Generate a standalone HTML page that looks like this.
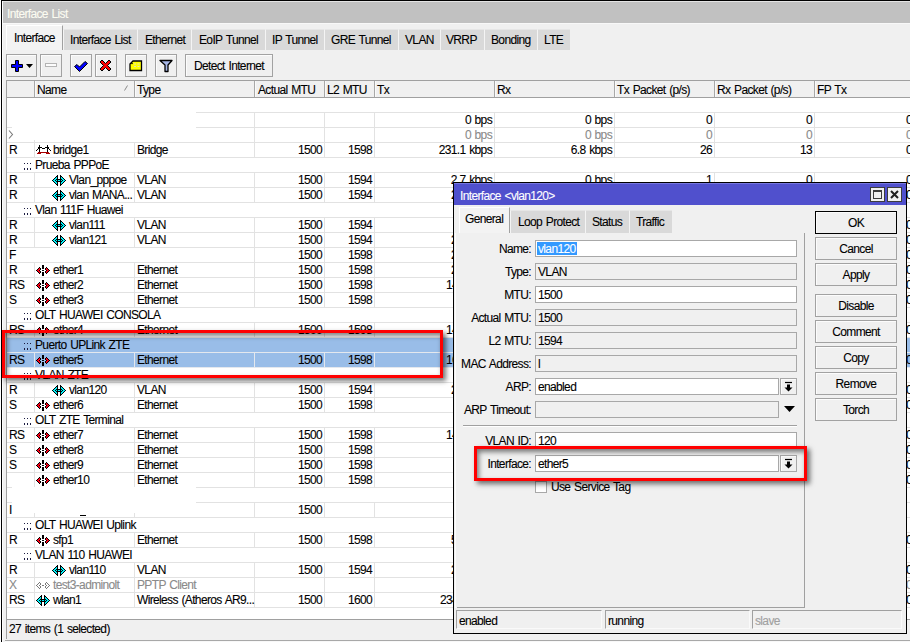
<!DOCTYPE html><html><head><meta charset="utf-8"><style>
*{box-sizing:border-box}
html,body{margin:0;padding:0}
body{width:910px;height:642px;overflow:hidden;position:relative;background:#f0f0f0;font-family:"Liberation Sans",sans-serif;font-size:12px;letter-spacing:-0.65px;word-spacing:1px;color:#000}
.a{position:absolute}
svg.a{overflow:visible}
.t{position:absolute;white-space:nowrap;line-height:13px;height:13px;-webkit-text-stroke:0.1px currentColor}
.btn{position:absolute;border:1px solid #a2a2a2;background:#f0f0f0;box-shadow:inset 1px 1px 0 #fcfcfc}
.in{position:absolute;border:1px solid #a8a8a8;background:#fff}
.dis{position:absolute;border:1px solid #a8a8a8;background:#f0f0f0}
</style></head><body>
<div class="a" style="left:0px;top:0px;width:1px;height:642px;background:#fff"></div>
<div class="a" style="left:1px;top:0px;width:1px;height:642px;background:#000"></div>
<div class="a" style="left:1px;top:0px;width:909px;height:1px;background:#000"></div>
<div class="a" style="left:2px;top:1px;width:908px;height:1px;background:#e4e4e4"></div>
<div class="a" style="left:2px;top:1px;width:1px;height:641px;background:#fcfcfc"></div>
<div class="a" style="left:3px;top:2px;width:907px;height:21px;background:#c1c1c1"></div>
<div class="a" style="left:3px;top:23px;width:907px;height:1px;background:#f8f8f8"></div>
<div class="t" style="left:7px;top:8px;color:#fcfcf2">Interface List</div>
<div class="a" style="left:6px;top:25px;width:57px;height:25px;background:#f3f3f3;border-left:1px solid #fff;border-top:1px solid #fff;border-right:1px solid #a0a0a0"></div>
<div class="t" style="left:14px;top:32px;">Interface</div>
<div class="a" style="left:63px;top:29px;width:74px;height:21px;background:#d9d9d9;border-left:1px solid #f4f4f4;border-top:1px solid #e6e6e6"></div>
<div class="t" style="left:70px;top:34px;">Interface List</div>
<div class="a" style="left:137px;top:29px;width:54px;height:21px;background:#d9d9d9;border-left:1px solid #f4f4f4;border-top:1px solid #e6e6e6"></div>
<div class="t" style="left:145px;top:34px;">Ethernet</div>
<div class="a" style="left:191px;top:29px;width:74px;height:21px;background:#d9d9d9;border-left:1px solid #f4f4f4;border-top:1px solid #e6e6e6"></div>
<div class="t" style="left:199px;top:34px;">EoIP Tunnel</div>
<div class="a" style="left:265px;top:29px;width:59px;height:21px;background:#d9d9d9;border-left:1px solid #f4f4f4;border-top:1px solid #e6e6e6"></div>
<div class="t" style="left:272px;top:34px;">IP Tunnel</div>
<div class="a" style="left:324px;top:29px;width:74px;height:21px;background:#d9d9d9;border-left:1px solid #f4f4f4;border-top:1px solid #e6e6e6"></div>
<div class="t" style="left:331px;top:34px;">GRE Tunnel</div>
<div class="a" style="left:398px;top:29px;width:42px;height:21px;background:#d9d9d9;border-left:1px solid #f4f4f4;border-top:1px solid #e6e6e6"></div>
<div class="t" style="left:405px;top:34px;">VLAN</div>
<div class="a" style="left:440px;top:29px;width:44px;height:21px;background:#d9d9d9;border-left:1px solid #f4f4f4;border-top:1px solid #e6e6e6"></div>
<div class="t" style="left:446px;top:34px;">VRRP</div>
<div class="a" style="left:484px;top:29px;width:53px;height:21px;background:#d9d9d9;border-left:1px solid #f4f4f4;border-top:1px solid #e6e6e6"></div>
<div class="t" style="left:491px;top:34px;">Bonding</div>
<div class="a" style="left:537px;top:29px;width:33px;height:21px;background:#d9d9d9;border-left:1px solid #f4f4f4;border-top:1px solid #e6e6e6"></div>
<div class="t" style="left:544px;top:34px;">LTE</div>
<div class="btn" style="left:6px;top:54px;width:31px;height:23px"></div>
<div class="btn" style="left:40px;top:54px;width:22px;height:23px"></div>
<div class="btn" style="left:70px;top:54px;width:22px;height:23px"></div>
<div class="btn" style="left:95px;top:54px;width:22px;height:23px"></div>
<div class="btn" style="left:125px;top:54px;width:22px;height:23px"></div>
<div class="btn" style="left:155px;top:54px;width:22px;height:23px"></div>
<div class="btn" style="left:185px;top:54px;width:88px;height:23px"></div>
<div class="t" style="left:194px;top:60px;">Detect Internet</div>
<svg class="a" style="left:10px;top:59px" width="26" height="14" viewBox="0 0 26 14"><path d="M5.5 1.5h3v4h4v3h-4v4h-3v-4h-4v-3h4z" fill="#0000ff" stroke="#000" stroke-width="1"/><path d="M16 5h7l-3.5 4z" fill="#000"/></svg>
<svg class="a" style="left:44px;top:62px" width="14" height="8" viewBox="0 0 14 8"><rect x="1.5" y="1.5" width="11" height="3" fill="#fcfcfc" stroke="#b4b4b4"/></svg>
<svg class="a" style="left:73px;top:59px" width="16" height="14" viewBox="0 0 16 14"><path d="M1.5 7.5l2.5-2 2.5 2.5 5.5-5.5 2.5 2-8 8z" fill="#0000ff" stroke="#000" stroke-width="1" stroke-linejoin="round"/></svg>
<svg class="a" style="left:99px;top:59px" width="14" height="14" viewBox="0 0 14 14"><path d="M1 3l2-2 3.5 3.5 3.5-3.5 2 2-3.5 3.5 3.5 3.5-2 2-3.5-3.5-3.5 3.5-2-2 3.5-3.5z" fill="#ff0000" stroke="#000" stroke-width="1"/></svg>
<svg class="a" style="left:128px;top:60px" width="16" height="12" viewBox="0 0 16 12"><path d="M2 4l3-3h8.5v9.5h-11.5z" fill="#ffff00" stroke="#000" stroke-width="1.3"/><path d="M6 4h2M9.5 4h2M6 6.5h2M9.5 6.5h2" stroke="#e0e0c0" stroke-width="1"/><circle cx="4" cy="3.5" r="0.8" fill="#000"/></svg>
<svg class="a" style="left:159px;top:59px" width="14" height="14" viewBox="0 0 14 14"><path d="M1 1.5h12l-4 4.5v6.5h-3v-6.5z" fill="#a6b6e6" stroke="#000" stroke-width="1.3" stroke-linejoin="round"/></svg>
<div class="a" style="left:6px;top:80px;width:904px;height:18px;background:#f0f0f0;border-top:1px solid #a0a0a0;border-bottom:1px solid #a0a0a0;border-left:1px solid #a0a0a0"></div>
<div class="a" style="left:34px;top:81px;width:1px;height:16px;background:#a8a8a8"></div>
<div class="a" style="left:35px;top:81px;width:1px;height:16px;background:#fafafa"></div>
<div class="a" style="left:134px;top:81px;width:1px;height:16px;background:#a8a8a8"></div>
<div class="a" style="left:135px;top:81px;width:1px;height:16px;background:#fafafa"></div>
<div class="a" style="left:254px;top:81px;width:1px;height:16px;background:#a8a8a8"></div>
<div class="a" style="left:255px;top:81px;width:1px;height:16px;background:#fafafa"></div>
<div class="a" style="left:324px;top:81px;width:1px;height:16px;background:#a8a8a8"></div>
<div class="a" style="left:325px;top:81px;width:1px;height:16px;background:#fafafa"></div>
<div class="a" style="left:374px;top:81px;width:1px;height:16px;background:#a8a8a8"></div>
<div class="a" style="left:375px;top:81px;width:1px;height:16px;background:#fafafa"></div>
<div class="a" style="left:494px;top:81px;width:1px;height:16px;background:#a8a8a8"></div>
<div class="a" style="left:495px;top:81px;width:1px;height:16px;background:#fafafa"></div>
<div class="a" style="left:614px;top:81px;width:1px;height:16px;background:#a8a8a8"></div>
<div class="a" style="left:615px;top:81px;width:1px;height:16px;background:#fafafa"></div>
<div class="a" style="left:714px;top:81px;width:1px;height:16px;background:#a8a8a8"></div>
<div class="a" style="left:715px;top:81px;width:1px;height:16px;background:#fafafa"></div>
<div class="a" style="left:814px;top:81px;width:1px;height:16px;background:#a8a8a8"></div>
<div class="a" style="left:815px;top:81px;width:1px;height:16px;background:#fafafa"></div>
<div class="t" style="left:37px;top:84px;">Name</div>
<div class="t" style="left:137px;top:84px;">Type</div>
<div class="t" style="left:258px;top:84px;">Actual MTU</div>
<div class="t" style="left:327px;top:84px;">L2 MTU</div>
<div class="t" style="left:377px;top:84px;">Tx</div>
<div class="t" style="left:497px;top:84px;">Rx</div>
<div class="t" style="left:617px;top:84px;">Tx Packet (p/s)</div>
<div class="t" style="left:717px;top:84px;">Rx Packet (p/s)</div>
<div class="t" style="left:817px;top:84px;">FP Tx</div>
<svg class="a" style="left:123px;top:84px" width="6" height="8" viewBox="0 0 6 8"><path d="M1.5 6.5l3-5" stroke="#8a8a8a" stroke-width="1"/></svg>
<div class="a" style="left:6px;top:98px;width:1px;height:541px;background:#a0a0a0"></div>
<div class="a" style="left:7px;top:98px;width:903px;height:521px;background:#fff"></div>
<div class="a" style="left:6px;top:619px;width:904px;height:1px;background:#a0a0a0"></div>
<div class="a" style="left:5px;top:640px;width:905px;height:1px;background:#a8a8a8"></div>
<div class="a" style="left:5px;top:641px;width:905px;height:1px;background:#f8f8f8"></div>
<div class="a" style="left:196px;top:112px;width:714px;height:1px;background:#e2e2e2"></div>
<div class="a" style="left:196px;top:127px;width:714px;height:1px;background:#e2e2e2"></div>
<div class="a" style="left:7px;top:127px;width:5px;height:1px;background:#e2e2e2"></div>
<div class="a" style="left:254px;top:113px;width:1px;height:14px;background:#e2e2e2"></div>
<div class="a" style="left:324px;top:113px;width:1px;height:14px;background:#e2e2e2"></div>
<div class="a" style="left:374px;top:113px;width:1px;height:14px;background:#e2e2e2"></div>
<div class="a" style="left:494px;top:113px;width:1px;height:14px;background:#e2e2e2"></div>
<div class="a" style="left:614px;top:113px;width:1px;height:14px;background:#e2e2e2"></div>
<div class="a" style="left:714px;top:113px;width:1px;height:14px;background:#e2e2e2"></div>
<div class="a" style="left:814px;top:113px;width:1px;height:14px;background:#e2e2e2"></div>
<div class="t" style="right:418px;top:114px;color:#000">0 bps</div>
<div class="t" style="right:298px;top:114px;color:#000">0 bps</div>
<div class="t" style="right:198px;top:114px;color:#000">0</div>
<div class="t" style="right:98px;top:114px;color:#000">0</div>
<div class="t" style="right:-2px;top:114px;color:#000">0</div>
<div class="a" style="left:7px;top:142px;width:903px;height:1px;background:#e2e2e2"></div>
<div class="a" style="left:34px;top:140px;width:1px;height:2px;background:#e2e2e2"></div>
<div class="a" style="left:254px;top:128px;width:1px;height:14px;background:#e2e2e2"></div>
<div class="a" style="left:324px;top:128px;width:1px;height:14px;background:#e2e2e2"></div>
<div class="a" style="left:374px;top:128px;width:1px;height:14px;background:#e2e2e2"></div>
<div class="a" style="left:494px;top:128px;width:1px;height:14px;background:#e2e2e2"></div>
<div class="a" style="left:614px;top:128px;width:1px;height:14px;background:#e2e2e2"></div>
<div class="a" style="left:714px;top:128px;width:1px;height:14px;background:#e2e2e2"></div>
<div class="a" style="left:814px;top:128px;width:1px;height:14px;background:#e2e2e2"></div>
<div class="t" style="right:418px;top:129px;color:#8a8a8a">0 bps</div>
<div class="t" style="right:298px;top:129px;color:#8a8a8a">0 bps</div>
<div class="t" style="right:198px;top:129px;color:#8a8a8a">0</div>
<div class="t" style="right:98px;top:129px;color:#8a8a8a">0</div>
<div class="t" style="right:-2px;top:129px;color:#8a8a8a">0</div>
<div class="a" style="left:7px;top:157px;width:903px;height:1px;background:#e2e2e2"></div>
<div class="a" style="left:34px;top:143px;width:1px;height:14px;background:#e2e2e2"></div>
<div class="a" style="left:134px;top:143px;width:1px;height:14px;background:#e2e2e2"></div>
<div class="a" style="left:254px;top:143px;width:1px;height:14px;background:#e2e2e2"></div>
<div class="a" style="left:324px;top:143px;width:1px;height:14px;background:#e2e2e2"></div>
<div class="a" style="left:374px;top:143px;width:1px;height:14px;background:#e2e2e2"></div>
<div class="a" style="left:494px;top:143px;width:1px;height:14px;background:#e2e2e2"></div>
<div class="a" style="left:614px;top:143px;width:1px;height:14px;background:#e2e2e2"></div>
<div class="a" style="left:714px;top:143px;width:1px;height:14px;background:#e2e2e2"></div>
<div class="a" style="left:814px;top:143px;width:1px;height:14px;background:#e2e2e2"></div>
<div class="t" style="left:9px;top:144px;color:#000">R</div>
<svg class="a" style="left:35px;top:143px" width="17" height="12" viewBox="0 0 17 12" shape-rendering="crispEdges"><path d="M4 2h1v1h-1zM12 2h1v1h-1zM4 3h1v1h-1zM12 3h1v1h-1zM3 4h1v1h-1zM4 4h1v1h-1zM5 4h1v1h-1zM6 4h1v1h-1zM10 4h1v1h-1zM11 4h1v1h-1zM12 4h1v1h-1zM13 4h1v1h-1zM3 5h1v1h-1zM4 5h1v1h-1zM7 5h1v1h-1zM8 5h1v1h-1zM9 5h1v1h-1zM12 5h1v1h-1zM13 5h1v1h-1zM2 6h1v1h-1zM4 6h1v1h-1zM12 6h1v1h-1zM14 6h1v1h-1zM1 7h1v1h-1zM4 7h1v1h-1zM12 7h1v1h-1zM15 7h1v1h-1zM4 8h1v1h-1zM12 8h1v1h-1z" fill="#000"/><path d="M3 9h1v1h-1zM4 9h1v1h-1zM5 9h1v1h-1zM6 9h1v1h-1zM7 9h1v1h-1zM8 9h1v1h-1zM9 9h1v1h-1zM10 9h1v1h-1zM11 9h1v1h-1zM12 9h1v1h-1zM13 9h1v1h-1zM2 10h1v1h-1zM3 10h1v1h-1zM4 10h1v1h-1zM5 10h1v1h-1zM11 10h1v1h-1zM12 10h1v1h-1zM13 10h1v1h-1zM14 10h1v1h-1z" fill="#a80000"/></svg>
<div class="t" style="left:53px;top:144px;color:#000">bridge1</div>
<div class="t" style="left:137px;top:144px;color:#000">Bridge</div>
<div class="t" style="right:588px;top:144px;color:#000">1500</div>
<div class="t" style="right:538px;top:144px;color:#000">1598</div>
<div class="t" style="right:418px;top:144px;color:#000">231.1 kbps</div>
<div class="t" style="right:298px;top:144px;color:#000">6.8 kbps</div>
<div class="t" style="right:198px;top:144px;color:#000">26</div>
<div class="t" style="right:98px;top:144px;color:#000">13</div>
<div class="t" style="right:-2px;top:144px;color:#000">0</div>
<div class="a" style="left:24px;top:163px;width:1px;height:1px;background:#1a1a40"></div>
<div class="a" style="left:24px;top:168px;width:1px;height:2px;background:#1a1a40"></div>
<div class="a" style="left:27px;top:163px;width:1px;height:1px;background:#1a1a40"></div>
<div class="a" style="left:27px;top:168px;width:1px;height:2px;background:#1a1a40"></div>
<div class="a" style="left:30px;top:163px;width:1px;height:1px;background:#1a1a40"></div>
<div class="a" style="left:30px;top:168px;width:1px;height:2px;background:#1a1a40"></div>
<div class="t" style="left:35px;top:159px;">Prueba PPPoE</div>
<div class="a" style="left:7px;top:172px;width:903px;height:1px;background:#e2e2e2"></div>
<div class="a" style="left:7px;top:187px;width:903px;height:1px;background:#e2e2e2"></div>
<div class="a" style="left:34px;top:173px;width:1px;height:14px;background:#e2e2e2"></div>
<div class="a" style="left:134px;top:173px;width:1px;height:14px;background:#e2e2e2"></div>
<div class="a" style="left:254px;top:173px;width:1px;height:14px;background:#e2e2e2"></div>
<div class="a" style="left:324px;top:173px;width:1px;height:14px;background:#e2e2e2"></div>
<div class="a" style="left:374px;top:173px;width:1px;height:14px;background:#e2e2e2"></div>
<div class="a" style="left:494px;top:173px;width:1px;height:14px;background:#e2e2e2"></div>
<div class="a" style="left:614px;top:173px;width:1px;height:14px;background:#e2e2e2"></div>
<div class="a" style="left:714px;top:173px;width:1px;height:14px;background:#e2e2e2"></div>
<div class="a" style="left:814px;top:173px;width:1px;height:14px;background:#e2e2e2"></div>
<div class="t" style="left:9px;top:174px;color:#000">R</div>
<svg class="a" style="left:51px;top:174px" width="16" height="13" viewBox="0 0 16 13" shape-rendering="crispEdges"><path d="M6 1h1v1h-1zM9 1h1v1h-1zM5 2h1v1h-1zM6 2h1v1h-1zM9 2h1v1h-1zM10 2h1v1h-1zM4 3h1v1h-1zM6 3h1v1h-1zM9 3h1v1h-1zM11 3h1v1h-1zM3 4h1v1h-1zM6 4h1v1h-1zM9 4h1v1h-1zM12 4h1v1h-1zM2 5h1v1h-1zM5 5h1v1h-1zM6 5h1v1h-1zM7 5h1v1h-1zM8 5h1v1h-1zM9 5h1v1h-1zM10 5h1v1h-1zM13 5h1v1h-1zM1 6h1v1h-1zM4 6h1v1h-1zM6 6h1v1h-1zM9 6h1v1h-1zM11 6h1v1h-1zM14 6h1v1h-1zM2 7h1v1h-1zM5 7h1v1h-1zM6 7h1v1h-1zM7 7h1v1h-1zM8 7h1v1h-1zM9 7h1v1h-1zM10 7h1v1h-1zM13 7h1v1h-1zM3 8h1v1h-1zM6 8h1v1h-1zM9 8h1v1h-1zM12 8h1v1h-1zM4 9h1v1h-1zM6 9h1v1h-1zM9 9h1v1h-1zM11 9h1v1h-1zM5 10h1v1h-1zM6 10h1v1h-1zM9 10h1v1h-1zM10 10h1v1h-1zM6 11h1v1h-1zM9 11h1v1h-1z" fill="#000"/><path d="M5 3h1v1h-1zM10 3h1v1h-1zM4 4h1v1h-1zM5 4h1v1h-1zM10 4h1v1h-1zM11 4h1v1h-1zM3 5h1v1h-1zM4 5h1v1h-1zM11 5h1v1h-1zM12 5h1v1h-1zM2 6h1v1h-1zM3 6h1v1h-1zM5 6h1v1h-1zM7 6h1v1h-1zM8 6h1v1h-1zM10 6h1v1h-1zM12 6h1v1h-1zM13 6h1v1h-1zM3 7h1v1h-1zM4 7h1v1h-1zM11 7h1v1h-1zM12 7h1v1h-1zM4 8h1v1h-1zM5 8h1v1h-1zM10 8h1v1h-1zM11 8h1v1h-1zM5 9h1v1h-1zM10 9h1v1h-1z" fill="#00f0f8"/></svg>
<div class="t" style="left:69px;top:174px;color:#000">Vlan_pppoe</div>
<div class="t" style="left:137px;top:174px;color:#000">VLAN</div>
<div class="t" style="right:588px;top:174px;color:#000">1500</div>
<div class="t" style="right:538px;top:174px;color:#000">1594</div>
<div class="t" style="right:418px;top:174px;color:#000">2.7 kbps</div>
<div class="t" style="right:298px;top:174px;color:#000">0 bps</div>
<div class="t" style="right:198px;top:174px;color:#000">1</div>
<div class="t" style="right:98px;top:174px;color:#000">0</div>
<div class="t" style="right:-2px;top:174px;color:#000">0</div>
<div class="a" style="left:7px;top:202px;width:903px;height:1px;background:#e2e2e2"></div>
<div class="a" style="left:34px;top:188px;width:1px;height:14px;background:#e2e2e2"></div>
<div class="a" style="left:134px;top:188px;width:1px;height:14px;background:#e2e2e2"></div>
<div class="a" style="left:254px;top:188px;width:1px;height:14px;background:#e2e2e2"></div>
<div class="a" style="left:324px;top:188px;width:1px;height:14px;background:#e2e2e2"></div>
<div class="a" style="left:374px;top:188px;width:1px;height:14px;background:#e2e2e2"></div>
<div class="a" style="left:494px;top:188px;width:1px;height:14px;background:#e2e2e2"></div>
<div class="a" style="left:614px;top:188px;width:1px;height:14px;background:#e2e2e2"></div>
<div class="a" style="left:714px;top:188px;width:1px;height:14px;background:#e2e2e2"></div>
<div class="a" style="left:814px;top:188px;width:1px;height:14px;background:#e2e2e2"></div>
<div class="t" style="left:9px;top:189px;color:#000">R</div>
<svg class="a" style="left:51px;top:189px" width="16" height="13" viewBox="0 0 16 13" shape-rendering="crispEdges"><path d="M6 1h1v1h-1zM9 1h1v1h-1zM5 2h1v1h-1zM6 2h1v1h-1zM9 2h1v1h-1zM10 2h1v1h-1zM4 3h1v1h-1zM6 3h1v1h-1zM9 3h1v1h-1zM11 3h1v1h-1zM3 4h1v1h-1zM6 4h1v1h-1zM9 4h1v1h-1zM12 4h1v1h-1zM2 5h1v1h-1zM5 5h1v1h-1zM6 5h1v1h-1zM7 5h1v1h-1zM8 5h1v1h-1zM9 5h1v1h-1zM10 5h1v1h-1zM13 5h1v1h-1zM1 6h1v1h-1zM4 6h1v1h-1zM6 6h1v1h-1zM9 6h1v1h-1zM11 6h1v1h-1zM14 6h1v1h-1zM2 7h1v1h-1zM5 7h1v1h-1zM6 7h1v1h-1zM7 7h1v1h-1zM8 7h1v1h-1zM9 7h1v1h-1zM10 7h1v1h-1zM13 7h1v1h-1zM3 8h1v1h-1zM6 8h1v1h-1zM9 8h1v1h-1zM12 8h1v1h-1zM4 9h1v1h-1zM6 9h1v1h-1zM9 9h1v1h-1zM11 9h1v1h-1zM5 10h1v1h-1zM6 10h1v1h-1zM9 10h1v1h-1zM10 10h1v1h-1zM6 11h1v1h-1zM9 11h1v1h-1z" fill="#000"/><path d="M5 3h1v1h-1zM10 3h1v1h-1zM4 4h1v1h-1zM5 4h1v1h-1zM10 4h1v1h-1zM11 4h1v1h-1zM3 5h1v1h-1zM4 5h1v1h-1zM11 5h1v1h-1zM12 5h1v1h-1zM2 6h1v1h-1zM3 6h1v1h-1zM5 6h1v1h-1zM7 6h1v1h-1zM8 6h1v1h-1zM10 6h1v1h-1zM12 6h1v1h-1zM13 6h1v1h-1zM3 7h1v1h-1zM4 7h1v1h-1zM11 7h1v1h-1zM12 7h1v1h-1zM4 8h1v1h-1zM5 8h1v1h-1zM10 8h1v1h-1zM11 8h1v1h-1zM5 9h1v1h-1zM10 9h1v1h-1z" fill="#00f0f8"/></svg>
<div class="t" style="left:69px;top:189px;color:#000">vlan MANA...</div>
<div class="t" style="left:137px;top:189px;color:#000">VLAN</div>
<div class="t" style="right:588px;top:189px;color:#000">1500</div>
<div class="t" style="right:538px;top:189px;color:#000">1594</div>
<div class="t" style="left:451px;top:189px;color:#000">2.7 kbps</div>
<div class="t" style="right:-2px;top:189px;color:#000">0</div>
<div class="a" style="left:24px;top:208px;width:1px;height:1px;background:#1a1a40"></div>
<div class="a" style="left:24px;top:213px;width:1px;height:2px;background:#1a1a40"></div>
<div class="a" style="left:27px;top:208px;width:1px;height:1px;background:#1a1a40"></div>
<div class="a" style="left:27px;top:213px;width:1px;height:2px;background:#1a1a40"></div>
<div class="a" style="left:30px;top:208px;width:1px;height:1px;background:#1a1a40"></div>
<div class="a" style="left:30px;top:213px;width:1px;height:2px;background:#1a1a40"></div>
<div class="t" style="left:35px;top:204px;">Vlan 111F Huawei</div>
<div class="a" style="left:7px;top:217px;width:903px;height:1px;background:#e2e2e2"></div>
<div class="a" style="left:7px;top:232px;width:903px;height:1px;background:#e2e2e2"></div>
<div class="a" style="left:34px;top:218px;width:1px;height:14px;background:#e2e2e2"></div>
<div class="a" style="left:134px;top:218px;width:1px;height:14px;background:#e2e2e2"></div>
<div class="a" style="left:254px;top:218px;width:1px;height:14px;background:#e2e2e2"></div>
<div class="a" style="left:324px;top:218px;width:1px;height:14px;background:#e2e2e2"></div>
<div class="a" style="left:374px;top:218px;width:1px;height:14px;background:#e2e2e2"></div>
<div class="a" style="left:494px;top:218px;width:1px;height:14px;background:#e2e2e2"></div>
<div class="a" style="left:614px;top:218px;width:1px;height:14px;background:#e2e2e2"></div>
<div class="a" style="left:714px;top:218px;width:1px;height:14px;background:#e2e2e2"></div>
<div class="a" style="left:814px;top:218px;width:1px;height:14px;background:#e2e2e2"></div>
<div class="t" style="left:9px;top:219px;color:#000">R</div>
<svg class="a" style="left:51px;top:219px" width="16" height="13" viewBox="0 0 16 13" shape-rendering="crispEdges"><path d="M6 1h1v1h-1zM9 1h1v1h-1zM5 2h1v1h-1zM6 2h1v1h-1zM9 2h1v1h-1zM10 2h1v1h-1zM4 3h1v1h-1zM6 3h1v1h-1zM9 3h1v1h-1zM11 3h1v1h-1zM3 4h1v1h-1zM6 4h1v1h-1zM9 4h1v1h-1zM12 4h1v1h-1zM2 5h1v1h-1zM5 5h1v1h-1zM6 5h1v1h-1zM7 5h1v1h-1zM8 5h1v1h-1zM9 5h1v1h-1zM10 5h1v1h-1zM13 5h1v1h-1zM1 6h1v1h-1zM4 6h1v1h-1zM6 6h1v1h-1zM9 6h1v1h-1zM11 6h1v1h-1zM14 6h1v1h-1zM2 7h1v1h-1zM5 7h1v1h-1zM6 7h1v1h-1zM7 7h1v1h-1zM8 7h1v1h-1zM9 7h1v1h-1zM10 7h1v1h-1zM13 7h1v1h-1zM3 8h1v1h-1zM6 8h1v1h-1zM9 8h1v1h-1zM12 8h1v1h-1zM4 9h1v1h-1zM6 9h1v1h-1zM9 9h1v1h-1zM11 9h1v1h-1zM5 10h1v1h-1zM6 10h1v1h-1zM9 10h1v1h-1zM10 10h1v1h-1zM6 11h1v1h-1zM9 11h1v1h-1z" fill="#000"/><path d="M5 3h1v1h-1zM10 3h1v1h-1zM4 4h1v1h-1zM5 4h1v1h-1zM10 4h1v1h-1zM11 4h1v1h-1zM3 5h1v1h-1zM4 5h1v1h-1zM11 5h1v1h-1zM12 5h1v1h-1zM2 6h1v1h-1zM3 6h1v1h-1zM5 6h1v1h-1zM7 6h1v1h-1zM8 6h1v1h-1zM10 6h1v1h-1zM12 6h1v1h-1zM13 6h1v1h-1zM3 7h1v1h-1zM4 7h1v1h-1zM11 7h1v1h-1zM12 7h1v1h-1zM4 8h1v1h-1zM5 8h1v1h-1zM10 8h1v1h-1zM11 8h1v1h-1zM5 9h1v1h-1zM10 9h1v1h-1z" fill="#00f0f8"/></svg>
<div class="t" style="left:69px;top:219px;color:#000">vlan111</div>
<div class="t" style="left:137px;top:219px;color:#000">VLAN</div>
<div class="t" style="right:588px;top:219px;color:#000">1500</div>
<div class="t" style="right:538px;top:219px;color:#000">1594</div>
<div class="t" style="right:-2px;top:219px;color:#000">0</div>
<div class="a" style="left:7px;top:247px;width:903px;height:1px;background:#e2e2e2"></div>
<div class="a" style="left:34px;top:233px;width:1px;height:14px;background:#e2e2e2"></div>
<div class="a" style="left:134px;top:233px;width:1px;height:14px;background:#e2e2e2"></div>
<div class="a" style="left:254px;top:233px;width:1px;height:14px;background:#e2e2e2"></div>
<div class="a" style="left:324px;top:233px;width:1px;height:14px;background:#e2e2e2"></div>
<div class="a" style="left:374px;top:233px;width:1px;height:14px;background:#e2e2e2"></div>
<div class="a" style="left:494px;top:233px;width:1px;height:14px;background:#e2e2e2"></div>
<div class="a" style="left:614px;top:233px;width:1px;height:14px;background:#e2e2e2"></div>
<div class="a" style="left:714px;top:233px;width:1px;height:14px;background:#e2e2e2"></div>
<div class="a" style="left:814px;top:233px;width:1px;height:14px;background:#e2e2e2"></div>
<div class="t" style="left:9px;top:234px;color:#000">R</div>
<svg class="a" style="left:51px;top:234px" width="16" height="13" viewBox="0 0 16 13" shape-rendering="crispEdges"><path d="M6 1h1v1h-1zM9 1h1v1h-1zM5 2h1v1h-1zM6 2h1v1h-1zM9 2h1v1h-1zM10 2h1v1h-1zM4 3h1v1h-1zM6 3h1v1h-1zM9 3h1v1h-1zM11 3h1v1h-1zM3 4h1v1h-1zM6 4h1v1h-1zM9 4h1v1h-1zM12 4h1v1h-1zM2 5h1v1h-1zM5 5h1v1h-1zM6 5h1v1h-1zM7 5h1v1h-1zM8 5h1v1h-1zM9 5h1v1h-1zM10 5h1v1h-1zM13 5h1v1h-1zM1 6h1v1h-1zM4 6h1v1h-1zM6 6h1v1h-1zM9 6h1v1h-1zM11 6h1v1h-1zM14 6h1v1h-1zM2 7h1v1h-1zM5 7h1v1h-1zM6 7h1v1h-1zM7 7h1v1h-1zM8 7h1v1h-1zM9 7h1v1h-1zM10 7h1v1h-1zM13 7h1v1h-1zM3 8h1v1h-1zM6 8h1v1h-1zM9 8h1v1h-1zM12 8h1v1h-1zM4 9h1v1h-1zM6 9h1v1h-1zM9 9h1v1h-1zM11 9h1v1h-1zM5 10h1v1h-1zM6 10h1v1h-1zM9 10h1v1h-1zM10 10h1v1h-1zM6 11h1v1h-1zM9 11h1v1h-1z" fill="#000"/><path d="M5 3h1v1h-1zM10 3h1v1h-1zM4 4h1v1h-1zM5 4h1v1h-1zM10 4h1v1h-1zM11 4h1v1h-1zM3 5h1v1h-1zM4 5h1v1h-1zM11 5h1v1h-1zM12 5h1v1h-1zM2 6h1v1h-1zM3 6h1v1h-1zM5 6h1v1h-1zM7 6h1v1h-1zM8 6h1v1h-1zM10 6h1v1h-1zM12 6h1v1h-1zM13 6h1v1h-1zM3 7h1v1h-1zM4 7h1v1h-1zM11 7h1v1h-1zM12 7h1v1h-1zM4 8h1v1h-1zM5 8h1v1h-1zM10 8h1v1h-1zM11 8h1v1h-1zM5 9h1v1h-1zM10 9h1v1h-1z" fill="#00f0f8"/></svg>
<div class="t" style="left:69px;top:234px;color:#000">vlan121</div>
<div class="t" style="left:137px;top:234px;color:#000">VLAN</div>
<div class="t" style="right:588px;top:234px;color:#000">1500</div>
<div class="t" style="right:538px;top:234px;color:#000">1594</div>
<div class="t" style="left:451px;top:234px;color:#000">2.7 kbps</div>
<div class="t" style="right:-2px;top:234px;color:#000">0</div>
<div class="a" style="left:7px;top:262px;width:903px;height:1px;background:#e2e2e2"></div>
<div class="a" style="left:254px;top:248px;width:1px;height:14px;background:#e2e2e2"></div>
<div class="a" style="left:324px;top:248px;width:1px;height:14px;background:#e2e2e2"></div>
<div class="a" style="left:374px;top:248px;width:1px;height:14px;background:#e2e2e2"></div>
<div class="a" style="left:494px;top:248px;width:1px;height:14px;background:#e2e2e2"></div>
<div class="a" style="left:614px;top:248px;width:1px;height:14px;background:#e2e2e2"></div>
<div class="a" style="left:714px;top:248px;width:1px;height:14px;background:#e2e2e2"></div>
<div class="a" style="left:814px;top:248px;width:1px;height:14px;background:#e2e2e2"></div>
<div class="t" style="left:9px;top:249px;color:#000">F</div>
<div class="t" style="right:588px;top:249px;color:#000">1500</div>
<div class="t" style="right:538px;top:249px;color:#000">1598</div>
<div class="t" style="left:451px;top:249px;color:#000">2.7 kbps</div>
<div class="t" style="right:-2px;top:249px;color:#000">0</div>
<div class="a" style="left:7px;top:277px;width:903px;height:1px;background:#e2e2e2"></div>
<div class="a" style="left:34px;top:263px;width:1px;height:14px;background:#e2e2e2"></div>
<div class="a" style="left:134px;top:263px;width:1px;height:14px;background:#e2e2e2"></div>
<div class="a" style="left:254px;top:263px;width:1px;height:14px;background:#e2e2e2"></div>
<div class="a" style="left:324px;top:263px;width:1px;height:14px;background:#e2e2e2"></div>
<div class="a" style="left:374px;top:263px;width:1px;height:14px;background:#e2e2e2"></div>
<div class="a" style="left:494px;top:263px;width:1px;height:14px;background:#e2e2e2"></div>
<div class="a" style="left:614px;top:263px;width:1px;height:14px;background:#e2e2e2"></div>
<div class="a" style="left:714px;top:263px;width:1px;height:14px;background:#e2e2e2"></div>
<div class="a" style="left:814px;top:263px;width:1px;height:14px;background:#e2e2e2"></div>
<div class="t" style="left:9px;top:264px;color:#000">R</div>
<svg class="a" style="left:35px;top:264px" width="16" height="13" viewBox="0 0 16 13" shape-rendering="crispEdges"><path d="M7 1h1v1h-1zM8 1h1v1h-1zM7 2h1v1h-1zM8 2h1v1h-1zM4 3h1v1h-1zM7 3h1v1h-1zM8 3h1v1h-1zM11 3h1v1h-1zM3 4h1v1h-1zM5 4h1v1h-1zM7 4h1v1h-1zM8 4h1v1h-1zM10 4h1v1h-1zM12 4h1v1h-1zM2 5h1v1h-1zM5 5h1v1h-1zM10 5h1v1h-1zM13 5h1v1h-1zM1 6h1v1h-1zM4 6h1v1h-1zM7 6h1v1h-1zM8 6h1v1h-1zM11 6h1v1h-1zM14 6h1v1h-1zM2 7h1v1h-1zM5 7h1v1h-1zM10 7h1v1h-1zM13 7h1v1h-1zM3 8h1v1h-1zM5 8h1v1h-1zM7 8h1v1h-1zM8 8h1v1h-1zM10 8h1v1h-1zM12 8h1v1h-1zM4 9h1v1h-1zM7 9h1v1h-1zM8 9h1v1h-1zM11 9h1v1h-1zM7 10h1v1h-1zM8 10h1v1h-1zM7 11h1v1h-1zM8 11h1v1h-1z" fill="#000"/><path d="M4 4h1v1h-1zM11 4h1v1h-1zM3 5h1v1h-1zM4 5h1v1h-1zM11 5h1v1h-1zM12 5h1v1h-1zM2 6h1v1h-1zM3 6h1v1h-1zM12 6h1v1h-1zM13 6h1v1h-1zM3 7h1v1h-1zM4 7h1v1h-1zM11 7h1v1h-1zM12 7h1v1h-1zM4 8h1v1h-1zM11 8h1v1h-1z" fill="#ff0018"/></svg>
<div class="t" style="left:53px;top:264px;color:#000">ether1</div>
<div class="t" style="left:137px;top:264px;color:#000">Ethernet</div>
<div class="t" style="right:588px;top:264px;color:#000">1500</div>
<div class="t" style="right:538px;top:264px;color:#000">1598</div>
<div class="t" style="left:451px;top:264px;color:#000">2.7 kbps</div>
<div class="t" style="right:-2px;top:264px;color:#000">0</div>
<div class="a" style="left:7px;top:292px;width:903px;height:1px;background:#e2e2e2"></div>
<div class="a" style="left:34px;top:278px;width:1px;height:14px;background:#e2e2e2"></div>
<div class="a" style="left:134px;top:278px;width:1px;height:14px;background:#e2e2e2"></div>
<div class="a" style="left:254px;top:278px;width:1px;height:14px;background:#e2e2e2"></div>
<div class="a" style="left:324px;top:278px;width:1px;height:14px;background:#e2e2e2"></div>
<div class="a" style="left:374px;top:278px;width:1px;height:14px;background:#e2e2e2"></div>
<div class="a" style="left:494px;top:278px;width:1px;height:14px;background:#e2e2e2"></div>
<div class="a" style="left:614px;top:278px;width:1px;height:14px;background:#e2e2e2"></div>
<div class="a" style="left:714px;top:278px;width:1px;height:14px;background:#e2e2e2"></div>
<div class="a" style="left:814px;top:278px;width:1px;height:14px;background:#e2e2e2"></div>
<div class="t" style="left:9px;top:279px;color:#000">RS</div>
<svg class="a" style="left:35px;top:279px" width="16" height="13" viewBox="0 0 16 13" shape-rendering="crispEdges"><path d="M7 1h1v1h-1zM8 1h1v1h-1zM7 2h1v1h-1zM8 2h1v1h-1zM4 3h1v1h-1zM7 3h1v1h-1zM8 3h1v1h-1zM11 3h1v1h-1zM3 4h1v1h-1zM5 4h1v1h-1zM7 4h1v1h-1zM8 4h1v1h-1zM10 4h1v1h-1zM12 4h1v1h-1zM2 5h1v1h-1zM5 5h1v1h-1zM10 5h1v1h-1zM13 5h1v1h-1zM1 6h1v1h-1zM4 6h1v1h-1zM7 6h1v1h-1zM8 6h1v1h-1zM11 6h1v1h-1zM14 6h1v1h-1zM2 7h1v1h-1zM5 7h1v1h-1zM10 7h1v1h-1zM13 7h1v1h-1zM3 8h1v1h-1zM5 8h1v1h-1zM7 8h1v1h-1zM8 8h1v1h-1zM10 8h1v1h-1zM12 8h1v1h-1zM4 9h1v1h-1zM7 9h1v1h-1zM8 9h1v1h-1zM11 9h1v1h-1zM7 10h1v1h-1zM8 10h1v1h-1zM7 11h1v1h-1zM8 11h1v1h-1z" fill="#000"/><path d="M4 4h1v1h-1zM11 4h1v1h-1zM3 5h1v1h-1zM4 5h1v1h-1zM11 5h1v1h-1zM12 5h1v1h-1zM2 6h1v1h-1zM3 6h1v1h-1zM12 6h1v1h-1zM13 6h1v1h-1zM3 7h1v1h-1zM4 7h1v1h-1zM11 7h1v1h-1zM12 7h1v1h-1zM4 8h1v1h-1zM11 8h1v1h-1z" fill="#ff0018"/></svg>
<div class="t" style="left:53px;top:279px;color:#000">ether2</div>
<div class="t" style="left:137px;top:279px;color:#000">Ethernet</div>
<div class="t" style="right:588px;top:279px;color:#000">1500</div>
<div class="t" style="right:538px;top:279px;color:#000">1598</div>
<div class="t" style="left:446px;top:279px;color:#000">146.2 kbps</div>
<div class="t" style="right:-2px;top:279px;color:#000">0</div>
<div class="a" style="left:7px;top:307px;width:903px;height:1px;background:#e2e2e2"></div>
<div class="a" style="left:34px;top:293px;width:1px;height:14px;background:#e2e2e2"></div>
<div class="a" style="left:134px;top:293px;width:1px;height:14px;background:#e2e2e2"></div>
<div class="a" style="left:254px;top:293px;width:1px;height:14px;background:#e2e2e2"></div>
<div class="a" style="left:324px;top:293px;width:1px;height:14px;background:#e2e2e2"></div>
<div class="a" style="left:374px;top:293px;width:1px;height:14px;background:#e2e2e2"></div>
<div class="a" style="left:494px;top:293px;width:1px;height:14px;background:#e2e2e2"></div>
<div class="a" style="left:614px;top:293px;width:1px;height:14px;background:#e2e2e2"></div>
<div class="a" style="left:714px;top:293px;width:1px;height:14px;background:#e2e2e2"></div>
<div class="a" style="left:814px;top:293px;width:1px;height:14px;background:#e2e2e2"></div>
<div class="t" style="left:9px;top:294px;color:#000">S</div>
<svg class="a" style="left:35px;top:294px" width="16" height="13" viewBox="0 0 16 13" shape-rendering="crispEdges"><path d="M7 1h1v1h-1zM8 1h1v1h-1zM7 2h1v1h-1zM8 2h1v1h-1zM4 3h1v1h-1zM7 3h1v1h-1zM8 3h1v1h-1zM11 3h1v1h-1zM3 4h1v1h-1zM5 4h1v1h-1zM7 4h1v1h-1zM8 4h1v1h-1zM10 4h1v1h-1zM12 4h1v1h-1zM2 5h1v1h-1zM5 5h1v1h-1zM10 5h1v1h-1zM13 5h1v1h-1zM1 6h1v1h-1zM4 6h1v1h-1zM7 6h1v1h-1zM8 6h1v1h-1zM11 6h1v1h-1zM14 6h1v1h-1zM2 7h1v1h-1zM5 7h1v1h-1zM10 7h1v1h-1zM13 7h1v1h-1zM3 8h1v1h-1zM5 8h1v1h-1zM7 8h1v1h-1zM8 8h1v1h-1zM10 8h1v1h-1zM12 8h1v1h-1zM4 9h1v1h-1zM7 9h1v1h-1zM8 9h1v1h-1zM11 9h1v1h-1zM7 10h1v1h-1zM8 10h1v1h-1zM7 11h1v1h-1zM8 11h1v1h-1z" fill="#000"/><path d="M4 4h1v1h-1zM11 4h1v1h-1zM3 5h1v1h-1zM4 5h1v1h-1zM11 5h1v1h-1zM12 5h1v1h-1zM2 6h1v1h-1zM3 6h1v1h-1zM12 6h1v1h-1zM13 6h1v1h-1zM3 7h1v1h-1zM4 7h1v1h-1zM11 7h1v1h-1zM12 7h1v1h-1zM4 8h1v1h-1zM11 8h1v1h-1z" fill="#ff0018"/></svg>
<div class="t" style="left:53px;top:294px;color:#000">ether3</div>
<div class="t" style="left:137px;top:294px;color:#000">Ethernet</div>
<div class="t" style="right:588px;top:294px;color:#000">1500</div>
<div class="t" style="right:538px;top:294px;color:#000">1598</div>
<div class="t" style="right:-2px;top:294px;color:#000">0</div>
<div class="a" style="left:24px;top:313px;width:1px;height:1px;background:#1a1a40"></div>
<div class="a" style="left:24px;top:318px;width:1px;height:2px;background:#1a1a40"></div>
<div class="a" style="left:27px;top:313px;width:1px;height:1px;background:#1a1a40"></div>
<div class="a" style="left:27px;top:318px;width:1px;height:2px;background:#1a1a40"></div>
<div class="a" style="left:30px;top:313px;width:1px;height:1px;background:#1a1a40"></div>
<div class="a" style="left:30px;top:318px;width:1px;height:2px;background:#1a1a40"></div>
<div class="t" style="left:35px;top:309px;">OLT HUAWEI CONSOLA</div>
<div class="a" style="left:7px;top:322px;width:903px;height:1px;background:#e2e2e2"></div>
<div class="a" style="left:7px;top:337px;width:903px;height:1px;background:#e2e2e2"></div>
<div class="a" style="left:34px;top:323px;width:1px;height:14px;background:#e2e2e2"></div>
<div class="a" style="left:134px;top:323px;width:1px;height:14px;background:#e2e2e2"></div>
<div class="a" style="left:254px;top:323px;width:1px;height:14px;background:#e2e2e2"></div>
<div class="a" style="left:324px;top:323px;width:1px;height:14px;background:#e2e2e2"></div>
<div class="a" style="left:374px;top:323px;width:1px;height:14px;background:#e2e2e2"></div>
<div class="a" style="left:494px;top:323px;width:1px;height:14px;background:#e2e2e2"></div>
<div class="a" style="left:614px;top:323px;width:1px;height:14px;background:#e2e2e2"></div>
<div class="a" style="left:714px;top:323px;width:1px;height:14px;background:#e2e2e2"></div>
<div class="a" style="left:814px;top:323px;width:1px;height:14px;background:#e2e2e2"></div>
<div class="t" style="left:9px;top:324px;color:#000">RS</div>
<svg class="a" style="left:35px;top:324px" width="16" height="13" viewBox="0 0 16 13" shape-rendering="crispEdges"><path d="M7 1h1v1h-1zM8 1h1v1h-1zM7 2h1v1h-1zM8 2h1v1h-1zM4 3h1v1h-1zM7 3h1v1h-1zM8 3h1v1h-1zM11 3h1v1h-1zM3 4h1v1h-1zM5 4h1v1h-1zM7 4h1v1h-1zM8 4h1v1h-1zM10 4h1v1h-1zM12 4h1v1h-1zM2 5h1v1h-1zM5 5h1v1h-1zM10 5h1v1h-1zM13 5h1v1h-1zM1 6h1v1h-1zM4 6h1v1h-1zM7 6h1v1h-1zM8 6h1v1h-1zM11 6h1v1h-1zM14 6h1v1h-1zM2 7h1v1h-1zM5 7h1v1h-1zM10 7h1v1h-1zM13 7h1v1h-1zM3 8h1v1h-1zM5 8h1v1h-1zM7 8h1v1h-1zM8 8h1v1h-1zM10 8h1v1h-1zM12 8h1v1h-1zM4 9h1v1h-1zM7 9h1v1h-1zM8 9h1v1h-1zM11 9h1v1h-1zM7 10h1v1h-1zM8 10h1v1h-1zM7 11h1v1h-1zM8 11h1v1h-1z" fill="#000"/><path d="M4 4h1v1h-1zM11 4h1v1h-1zM3 5h1v1h-1zM4 5h1v1h-1zM11 5h1v1h-1zM12 5h1v1h-1zM2 6h1v1h-1zM3 6h1v1h-1zM12 6h1v1h-1zM13 6h1v1h-1zM3 7h1v1h-1zM4 7h1v1h-1zM11 7h1v1h-1zM12 7h1v1h-1zM4 8h1v1h-1zM11 8h1v1h-1z" fill="#ff0018"/></svg>
<div class="t" style="left:53px;top:324px;color:#000">ether4</div>
<div class="t" style="left:137px;top:324px;color:#000">Ethernet</div>
<div class="t" style="right:588px;top:324px;color:#000">1500</div>
<div class="t" style="right:538px;top:324px;color:#000">1598</div>
<div class="t" style="left:446px;top:324px;color:#000">146.2 kbps</div>
<div class="t" style="right:-2px;top:324px;color:#000">0</div>
<div class="a" style="left:7px;top:338px;width:903px;height:14px;background:#99bde8"></div>
<div class="a" style="left:24px;top:343px;width:1px;height:1px;background:#1a1a40"></div>
<div class="a" style="left:24px;top:348px;width:1px;height:2px;background:#1a1a40"></div>
<div class="a" style="left:27px;top:343px;width:1px;height:1px;background:#1a1a40"></div>
<div class="a" style="left:27px;top:348px;width:1px;height:2px;background:#1a1a40"></div>
<div class="a" style="left:30px;top:343px;width:1px;height:1px;background:#1a1a40"></div>
<div class="a" style="left:30px;top:348px;width:1px;height:2px;background:#1a1a40"></div>
<div class="t" style="left:35px;top:339px;">Puerto UPLink ZTE</div>
<div class="a" style="left:7px;top:352px;width:903px;height:1px;background:#e4e8ee"></div>
<div class="a" style="left:7px;top:353px;width:903px;height:14px;background:#99bde8"></div>
<div class="a" style="left:7px;top:367px;width:903px;height:1px;background:#e4e8ee"></div>
<div class="a" style="left:34px;top:353px;width:1px;height:14px;background:#e4e8ee"></div>
<div class="a" style="left:134px;top:353px;width:1px;height:14px;background:#e4e8ee"></div>
<div class="a" style="left:254px;top:353px;width:1px;height:14px;background:#e4e8ee"></div>
<div class="a" style="left:324px;top:353px;width:1px;height:14px;background:#e4e8ee"></div>
<div class="a" style="left:374px;top:353px;width:1px;height:14px;background:#e4e8ee"></div>
<div class="a" style="left:494px;top:353px;width:1px;height:14px;background:#e4e8ee"></div>
<div class="a" style="left:614px;top:353px;width:1px;height:14px;background:#e4e8ee"></div>
<div class="a" style="left:714px;top:353px;width:1px;height:14px;background:#e4e8ee"></div>
<div class="a" style="left:814px;top:353px;width:1px;height:14px;background:#e4e8ee"></div>
<div class="t" style="left:9px;top:354px;color:#000">RS</div>
<svg class="a" style="left:35px;top:354px" width="16" height="13" viewBox="0 0 16 13" shape-rendering="crispEdges"><path d="M7 1h1v1h-1zM8 1h1v1h-1zM7 2h1v1h-1zM8 2h1v1h-1zM4 3h1v1h-1zM7 3h1v1h-1zM8 3h1v1h-1zM11 3h1v1h-1zM3 4h1v1h-1zM5 4h1v1h-1zM7 4h1v1h-1zM8 4h1v1h-1zM10 4h1v1h-1zM12 4h1v1h-1zM2 5h1v1h-1zM5 5h1v1h-1zM10 5h1v1h-1zM13 5h1v1h-1zM1 6h1v1h-1zM4 6h1v1h-1zM7 6h1v1h-1zM8 6h1v1h-1zM11 6h1v1h-1zM14 6h1v1h-1zM2 7h1v1h-1zM5 7h1v1h-1zM10 7h1v1h-1zM13 7h1v1h-1zM3 8h1v1h-1zM5 8h1v1h-1zM7 8h1v1h-1zM8 8h1v1h-1zM10 8h1v1h-1zM12 8h1v1h-1zM4 9h1v1h-1zM7 9h1v1h-1zM8 9h1v1h-1zM11 9h1v1h-1zM7 10h1v1h-1zM8 10h1v1h-1zM7 11h1v1h-1zM8 11h1v1h-1z" fill="#000"/><path d="M4 4h1v1h-1zM11 4h1v1h-1zM3 5h1v1h-1zM4 5h1v1h-1zM11 5h1v1h-1zM12 5h1v1h-1zM2 6h1v1h-1zM3 6h1v1h-1zM12 6h1v1h-1zM13 6h1v1h-1zM3 7h1v1h-1zM4 7h1v1h-1zM11 7h1v1h-1zM12 7h1v1h-1zM4 8h1v1h-1zM11 8h1v1h-1z" fill="#ff0018"/></svg>
<div class="t" style="left:53px;top:354px;color:#000">ether5</div>
<div class="t" style="left:137px;top:354px;color:#000">Ethernet</div>
<div class="t" style="right:588px;top:354px;color:#000">1500</div>
<div class="t" style="right:538px;top:354px;color:#000">1598</div>
<div class="t" style="left:446px;top:354px;color:#000">16.2 kbps</div>
<div class="t" style="right:-2px;top:354px;color:#000">0</div>
<div class="a" style="left:24px;top:373px;width:1px;height:1px;background:#1a1a40"></div>
<div class="a" style="left:24px;top:378px;width:1px;height:2px;background:#1a1a40"></div>
<div class="a" style="left:27px;top:373px;width:1px;height:1px;background:#1a1a40"></div>
<div class="a" style="left:27px;top:378px;width:1px;height:2px;background:#1a1a40"></div>
<div class="a" style="left:30px;top:373px;width:1px;height:1px;background:#1a1a40"></div>
<div class="a" style="left:30px;top:378px;width:1px;height:2px;background:#1a1a40"></div>
<div class="t" style="left:35px;top:369px;">VLAN ZTE</div>
<div class="a" style="left:7px;top:382px;width:903px;height:1px;background:#e2e2e2"></div>
<div class="a" style="left:7px;top:397px;width:903px;height:1px;background:#e2e2e2"></div>
<div class="a" style="left:34px;top:383px;width:1px;height:14px;background:#e2e2e2"></div>
<div class="a" style="left:134px;top:383px;width:1px;height:14px;background:#e2e2e2"></div>
<div class="a" style="left:254px;top:383px;width:1px;height:14px;background:#e2e2e2"></div>
<div class="a" style="left:324px;top:383px;width:1px;height:14px;background:#e2e2e2"></div>
<div class="a" style="left:374px;top:383px;width:1px;height:14px;background:#e2e2e2"></div>
<div class="a" style="left:494px;top:383px;width:1px;height:14px;background:#e2e2e2"></div>
<div class="a" style="left:614px;top:383px;width:1px;height:14px;background:#e2e2e2"></div>
<div class="a" style="left:714px;top:383px;width:1px;height:14px;background:#e2e2e2"></div>
<div class="a" style="left:814px;top:383px;width:1px;height:14px;background:#e2e2e2"></div>
<div class="t" style="left:9px;top:384px;color:#000">R</div>
<svg class="a" style="left:51px;top:384px" width="16" height="13" viewBox="0 0 16 13" shape-rendering="crispEdges"><path d="M6 1h1v1h-1zM9 1h1v1h-1zM5 2h1v1h-1zM6 2h1v1h-1zM9 2h1v1h-1zM10 2h1v1h-1zM4 3h1v1h-1zM6 3h1v1h-1zM9 3h1v1h-1zM11 3h1v1h-1zM3 4h1v1h-1zM6 4h1v1h-1zM9 4h1v1h-1zM12 4h1v1h-1zM2 5h1v1h-1zM5 5h1v1h-1zM6 5h1v1h-1zM7 5h1v1h-1zM8 5h1v1h-1zM9 5h1v1h-1zM10 5h1v1h-1zM13 5h1v1h-1zM1 6h1v1h-1zM4 6h1v1h-1zM6 6h1v1h-1zM9 6h1v1h-1zM11 6h1v1h-1zM14 6h1v1h-1zM2 7h1v1h-1zM5 7h1v1h-1zM6 7h1v1h-1zM7 7h1v1h-1zM8 7h1v1h-1zM9 7h1v1h-1zM10 7h1v1h-1zM13 7h1v1h-1zM3 8h1v1h-1zM6 8h1v1h-1zM9 8h1v1h-1zM12 8h1v1h-1zM4 9h1v1h-1zM6 9h1v1h-1zM9 9h1v1h-1zM11 9h1v1h-1zM5 10h1v1h-1zM6 10h1v1h-1zM9 10h1v1h-1zM10 10h1v1h-1zM6 11h1v1h-1zM9 11h1v1h-1z" fill="#000"/><path d="M5 3h1v1h-1zM10 3h1v1h-1zM4 4h1v1h-1zM5 4h1v1h-1zM10 4h1v1h-1zM11 4h1v1h-1zM3 5h1v1h-1zM4 5h1v1h-1zM11 5h1v1h-1zM12 5h1v1h-1zM2 6h1v1h-1zM3 6h1v1h-1zM5 6h1v1h-1zM7 6h1v1h-1zM8 6h1v1h-1zM10 6h1v1h-1zM12 6h1v1h-1zM13 6h1v1h-1zM3 7h1v1h-1zM4 7h1v1h-1zM11 7h1v1h-1zM12 7h1v1h-1zM4 8h1v1h-1zM5 8h1v1h-1zM10 8h1v1h-1zM11 8h1v1h-1zM5 9h1v1h-1zM10 9h1v1h-1z" fill="#00f0f8"/></svg>
<div class="t" style="left:69px;top:384px;color:#000">vlan120</div>
<div class="t" style="left:137px;top:384px;color:#000">VLAN</div>
<div class="t" style="right:588px;top:384px;color:#000">1500</div>
<div class="t" style="right:538px;top:384px;color:#000">1594</div>
<div class="t" style="left:451px;top:384px;color:#000">2.7 kbps</div>
<div class="t" style="right:-2px;top:384px;color:#000">0</div>
<div class="a" style="left:7px;top:412px;width:903px;height:1px;background:#e2e2e2"></div>
<div class="a" style="left:34px;top:398px;width:1px;height:14px;background:#e2e2e2"></div>
<div class="a" style="left:134px;top:398px;width:1px;height:14px;background:#e2e2e2"></div>
<div class="a" style="left:254px;top:398px;width:1px;height:14px;background:#e2e2e2"></div>
<div class="a" style="left:324px;top:398px;width:1px;height:14px;background:#e2e2e2"></div>
<div class="a" style="left:374px;top:398px;width:1px;height:14px;background:#e2e2e2"></div>
<div class="a" style="left:494px;top:398px;width:1px;height:14px;background:#e2e2e2"></div>
<div class="a" style="left:614px;top:398px;width:1px;height:14px;background:#e2e2e2"></div>
<div class="a" style="left:714px;top:398px;width:1px;height:14px;background:#e2e2e2"></div>
<div class="a" style="left:814px;top:398px;width:1px;height:14px;background:#e2e2e2"></div>
<div class="t" style="left:9px;top:399px;color:#000">S</div>
<svg class="a" style="left:35px;top:399px" width="16" height="13" viewBox="0 0 16 13" shape-rendering="crispEdges"><path d="M7 1h1v1h-1zM8 1h1v1h-1zM7 2h1v1h-1zM8 2h1v1h-1zM4 3h1v1h-1zM7 3h1v1h-1zM8 3h1v1h-1zM11 3h1v1h-1zM3 4h1v1h-1zM5 4h1v1h-1zM7 4h1v1h-1zM8 4h1v1h-1zM10 4h1v1h-1zM12 4h1v1h-1zM2 5h1v1h-1zM5 5h1v1h-1zM10 5h1v1h-1zM13 5h1v1h-1zM1 6h1v1h-1zM4 6h1v1h-1zM7 6h1v1h-1zM8 6h1v1h-1zM11 6h1v1h-1zM14 6h1v1h-1zM2 7h1v1h-1zM5 7h1v1h-1zM10 7h1v1h-1zM13 7h1v1h-1zM3 8h1v1h-1zM5 8h1v1h-1zM7 8h1v1h-1zM8 8h1v1h-1zM10 8h1v1h-1zM12 8h1v1h-1zM4 9h1v1h-1zM7 9h1v1h-1zM8 9h1v1h-1zM11 9h1v1h-1zM7 10h1v1h-1zM8 10h1v1h-1zM7 11h1v1h-1zM8 11h1v1h-1z" fill="#000"/><path d="M4 4h1v1h-1zM11 4h1v1h-1zM3 5h1v1h-1zM4 5h1v1h-1zM11 5h1v1h-1zM12 5h1v1h-1zM2 6h1v1h-1zM3 6h1v1h-1zM12 6h1v1h-1zM13 6h1v1h-1zM3 7h1v1h-1zM4 7h1v1h-1zM11 7h1v1h-1zM12 7h1v1h-1zM4 8h1v1h-1zM11 8h1v1h-1z" fill="#ff0018"/></svg>
<div class="t" style="left:53px;top:399px;color:#000">ether6</div>
<div class="t" style="left:137px;top:399px;color:#000">Ethernet</div>
<div class="t" style="right:588px;top:399px;color:#000">1500</div>
<div class="t" style="right:538px;top:399px;color:#000">1598</div>
<div class="t" style="right:-2px;top:399px;color:#000">0</div>
<div class="a" style="left:24px;top:418px;width:1px;height:1px;background:#1a1a40"></div>
<div class="a" style="left:24px;top:423px;width:1px;height:2px;background:#1a1a40"></div>
<div class="a" style="left:27px;top:418px;width:1px;height:1px;background:#1a1a40"></div>
<div class="a" style="left:27px;top:423px;width:1px;height:2px;background:#1a1a40"></div>
<div class="a" style="left:30px;top:418px;width:1px;height:1px;background:#1a1a40"></div>
<div class="a" style="left:30px;top:423px;width:1px;height:2px;background:#1a1a40"></div>
<div class="t" style="left:35px;top:414px;">OLT ZTE Terminal</div>
<div class="a" style="left:7px;top:427px;width:903px;height:1px;background:#e2e2e2"></div>
<div class="a" style="left:7px;top:442px;width:903px;height:1px;background:#e2e2e2"></div>
<div class="a" style="left:34px;top:428px;width:1px;height:14px;background:#e2e2e2"></div>
<div class="a" style="left:134px;top:428px;width:1px;height:14px;background:#e2e2e2"></div>
<div class="a" style="left:254px;top:428px;width:1px;height:14px;background:#e2e2e2"></div>
<div class="a" style="left:324px;top:428px;width:1px;height:14px;background:#e2e2e2"></div>
<div class="a" style="left:374px;top:428px;width:1px;height:14px;background:#e2e2e2"></div>
<div class="a" style="left:494px;top:428px;width:1px;height:14px;background:#e2e2e2"></div>
<div class="a" style="left:614px;top:428px;width:1px;height:14px;background:#e2e2e2"></div>
<div class="a" style="left:714px;top:428px;width:1px;height:14px;background:#e2e2e2"></div>
<div class="a" style="left:814px;top:428px;width:1px;height:14px;background:#e2e2e2"></div>
<div class="t" style="left:9px;top:429px;color:#000">RS</div>
<svg class="a" style="left:35px;top:429px" width="16" height="13" viewBox="0 0 16 13" shape-rendering="crispEdges"><path d="M7 1h1v1h-1zM8 1h1v1h-1zM7 2h1v1h-1zM8 2h1v1h-1zM4 3h1v1h-1zM7 3h1v1h-1zM8 3h1v1h-1zM11 3h1v1h-1zM3 4h1v1h-1zM5 4h1v1h-1zM7 4h1v1h-1zM8 4h1v1h-1zM10 4h1v1h-1zM12 4h1v1h-1zM2 5h1v1h-1zM5 5h1v1h-1zM10 5h1v1h-1zM13 5h1v1h-1zM1 6h1v1h-1zM4 6h1v1h-1zM7 6h1v1h-1zM8 6h1v1h-1zM11 6h1v1h-1zM14 6h1v1h-1zM2 7h1v1h-1zM5 7h1v1h-1zM10 7h1v1h-1zM13 7h1v1h-1zM3 8h1v1h-1zM5 8h1v1h-1zM7 8h1v1h-1zM8 8h1v1h-1zM10 8h1v1h-1zM12 8h1v1h-1zM4 9h1v1h-1zM7 9h1v1h-1zM8 9h1v1h-1zM11 9h1v1h-1zM7 10h1v1h-1zM8 10h1v1h-1zM7 11h1v1h-1zM8 11h1v1h-1z" fill="#000"/><path d="M4 4h1v1h-1zM11 4h1v1h-1zM3 5h1v1h-1zM4 5h1v1h-1zM11 5h1v1h-1zM12 5h1v1h-1zM2 6h1v1h-1zM3 6h1v1h-1zM12 6h1v1h-1zM13 6h1v1h-1zM3 7h1v1h-1zM4 7h1v1h-1zM11 7h1v1h-1zM12 7h1v1h-1zM4 8h1v1h-1zM11 8h1v1h-1z" fill="#ff0018"/></svg>
<div class="t" style="left:53px;top:429px;color:#000">ether7</div>
<div class="t" style="left:137px;top:429px;color:#000">Ethernet</div>
<div class="t" style="right:588px;top:429px;color:#000">1500</div>
<div class="t" style="right:538px;top:429px;color:#000">1598</div>
<div class="t" style="left:446px;top:429px;color:#000">146.2 kbps</div>
<div class="t" style="right:-2px;top:429px;color:#000">0</div>
<div class="a" style="left:7px;top:457px;width:903px;height:1px;background:#e2e2e2"></div>
<div class="a" style="left:34px;top:443px;width:1px;height:14px;background:#e2e2e2"></div>
<div class="a" style="left:134px;top:443px;width:1px;height:14px;background:#e2e2e2"></div>
<div class="a" style="left:254px;top:443px;width:1px;height:14px;background:#e2e2e2"></div>
<div class="a" style="left:324px;top:443px;width:1px;height:14px;background:#e2e2e2"></div>
<div class="a" style="left:374px;top:443px;width:1px;height:14px;background:#e2e2e2"></div>
<div class="a" style="left:494px;top:443px;width:1px;height:14px;background:#e2e2e2"></div>
<div class="a" style="left:614px;top:443px;width:1px;height:14px;background:#e2e2e2"></div>
<div class="a" style="left:714px;top:443px;width:1px;height:14px;background:#e2e2e2"></div>
<div class="a" style="left:814px;top:443px;width:1px;height:14px;background:#e2e2e2"></div>
<div class="t" style="left:9px;top:444px;color:#000">S</div>
<svg class="a" style="left:35px;top:444px" width="16" height="13" viewBox="0 0 16 13" shape-rendering="crispEdges"><path d="M7 1h1v1h-1zM8 1h1v1h-1zM7 2h1v1h-1zM8 2h1v1h-1zM4 3h1v1h-1zM7 3h1v1h-1zM8 3h1v1h-1zM11 3h1v1h-1zM3 4h1v1h-1zM5 4h1v1h-1zM7 4h1v1h-1zM8 4h1v1h-1zM10 4h1v1h-1zM12 4h1v1h-1zM2 5h1v1h-1zM5 5h1v1h-1zM10 5h1v1h-1zM13 5h1v1h-1zM1 6h1v1h-1zM4 6h1v1h-1zM7 6h1v1h-1zM8 6h1v1h-1zM11 6h1v1h-1zM14 6h1v1h-1zM2 7h1v1h-1zM5 7h1v1h-1zM10 7h1v1h-1zM13 7h1v1h-1zM3 8h1v1h-1zM5 8h1v1h-1zM7 8h1v1h-1zM8 8h1v1h-1zM10 8h1v1h-1zM12 8h1v1h-1zM4 9h1v1h-1zM7 9h1v1h-1zM8 9h1v1h-1zM11 9h1v1h-1zM7 10h1v1h-1zM8 10h1v1h-1zM7 11h1v1h-1zM8 11h1v1h-1z" fill="#000"/><path d="M4 4h1v1h-1zM11 4h1v1h-1zM3 5h1v1h-1zM4 5h1v1h-1zM11 5h1v1h-1zM12 5h1v1h-1zM2 6h1v1h-1zM3 6h1v1h-1zM12 6h1v1h-1zM13 6h1v1h-1zM3 7h1v1h-1zM4 7h1v1h-1zM11 7h1v1h-1zM12 7h1v1h-1zM4 8h1v1h-1zM11 8h1v1h-1z" fill="#ff0018"/></svg>
<div class="t" style="left:53px;top:444px;color:#000">ether8</div>
<div class="t" style="left:137px;top:444px;color:#000">Ethernet</div>
<div class="t" style="right:588px;top:444px;color:#000">1500</div>
<div class="t" style="right:538px;top:444px;color:#000">1598</div>
<div class="t" style="right:-2px;top:444px;color:#000">0</div>
<div class="a" style="left:7px;top:472px;width:903px;height:1px;background:#e2e2e2"></div>
<div class="a" style="left:34px;top:458px;width:1px;height:14px;background:#e2e2e2"></div>
<div class="a" style="left:134px;top:458px;width:1px;height:14px;background:#e2e2e2"></div>
<div class="a" style="left:254px;top:458px;width:1px;height:14px;background:#e2e2e2"></div>
<div class="a" style="left:324px;top:458px;width:1px;height:14px;background:#e2e2e2"></div>
<div class="a" style="left:374px;top:458px;width:1px;height:14px;background:#e2e2e2"></div>
<div class="a" style="left:494px;top:458px;width:1px;height:14px;background:#e2e2e2"></div>
<div class="a" style="left:614px;top:458px;width:1px;height:14px;background:#e2e2e2"></div>
<div class="a" style="left:714px;top:458px;width:1px;height:14px;background:#e2e2e2"></div>
<div class="a" style="left:814px;top:458px;width:1px;height:14px;background:#e2e2e2"></div>
<div class="t" style="left:9px;top:459px;color:#000">S</div>
<svg class="a" style="left:35px;top:459px" width="16" height="13" viewBox="0 0 16 13" shape-rendering="crispEdges"><path d="M7 1h1v1h-1zM8 1h1v1h-1zM7 2h1v1h-1zM8 2h1v1h-1zM4 3h1v1h-1zM7 3h1v1h-1zM8 3h1v1h-1zM11 3h1v1h-1zM3 4h1v1h-1zM5 4h1v1h-1zM7 4h1v1h-1zM8 4h1v1h-1zM10 4h1v1h-1zM12 4h1v1h-1zM2 5h1v1h-1zM5 5h1v1h-1zM10 5h1v1h-1zM13 5h1v1h-1zM1 6h1v1h-1zM4 6h1v1h-1zM7 6h1v1h-1zM8 6h1v1h-1zM11 6h1v1h-1zM14 6h1v1h-1zM2 7h1v1h-1zM5 7h1v1h-1zM10 7h1v1h-1zM13 7h1v1h-1zM3 8h1v1h-1zM5 8h1v1h-1zM7 8h1v1h-1zM8 8h1v1h-1zM10 8h1v1h-1zM12 8h1v1h-1zM4 9h1v1h-1zM7 9h1v1h-1zM8 9h1v1h-1zM11 9h1v1h-1zM7 10h1v1h-1zM8 10h1v1h-1zM7 11h1v1h-1zM8 11h1v1h-1z" fill="#000"/><path d="M4 4h1v1h-1zM11 4h1v1h-1zM3 5h1v1h-1zM4 5h1v1h-1zM11 5h1v1h-1zM12 5h1v1h-1zM2 6h1v1h-1zM3 6h1v1h-1zM12 6h1v1h-1zM13 6h1v1h-1zM3 7h1v1h-1zM4 7h1v1h-1zM11 7h1v1h-1zM12 7h1v1h-1zM4 8h1v1h-1zM11 8h1v1h-1z" fill="#ff0018"/></svg>
<div class="t" style="left:53px;top:459px;color:#000">ether9</div>
<div class="t" style="left:137px;top:459px;color:#000">Ethernet</div>
<div class="t" style="right:588px;top:459px;color:#000">1500</div>
<div class="t" style="right:538px;top:459px;color:#000">1598</div>
<div class="t" style="right:-2px;top:459px;color:#000">0</div>
<div class="a" style="left:196px;top:487px;width:714px;height:1px;background:#e2e2e2"></div>
<div class="a" style="left:7px;top:487px;width:5px;height:1px;background:#e2e2e2"></div>
<div class="a" style="left:34px;top:473px;width:1px;height:14px;background:#e2e2e2"></div>
<div class="a" style="left:134px;top:473px;width:1px;height:14px;background:#e2e2e2"></div>
<div class="a" style="left:254px;top:473px;width:1px;height:14px;background:#e2e2e2"></div>
<div class="a" style="left:324px;top:473px;width:1px;height:14px;background:#e2e2e2"></div>
<div class="a" style="left:374px;top:473px;width:1px;height:14px;background:#e2e2e2"></div>
<div class="a" style="left:494px;top:473px;width:1px;height:14px;background:#e2e2e2"></div>
<div class="a" style="left:614px;top:473px;width:1px;height:14px;background:#e2e2e2"></div>
<div class="a" style="left:714px;top:473px;width:1px;height:14px;background:#e2e2e2"></div>
<div class="a" style="left:814px;top:473px;width:1px;height:14px;background:#e2e2e2"></div>
<svg class="a" style="left:35px;top:474px" width="16" height="13" viewBox="0 0 16 13" shape-rendering="crispEdges"><path d="M7 1h1v1h-1zM8 1h1v1h-1zM7 2h1v1h-1zM8 2h1v1h-1zM4 3h1v1h-1zM7 3h1v1h-1zM8 3h1v1h-1zM11 3h1v1h-1zM3 4h1v1h-1zM5 4h1v1h-1zM7 4h1v1h-1zM8 4h1v1h-1zM10 4h1v1h-1zM12 4h1v1h-1zM2 5h1v1h-1zM5 5h1v1h-1zM10 5h1v1h-1zM13 5h1v1h-1zM1 6h1v1h-1zM4 6h1v1h-1zM7 6h1v1h-1zM8 6h1v1h-1zM11 6h1v1h-1zM14 6h1v1h-1zM2 7h1v1h-1zM5 7h1v1h-1zM10 7h1v1h-1zM13 7h1v1h-1zM3 8h1v1h-1zM5 8h1v1h-1zM7 8h1v1h-1zM8 8h1v1h-1zM10 8h1v1h-1zM12 8h1v1h-1zM4 9h1v1h-1zM7 9h1v1h-1zM8 9h1v1h-1zM11 9h1v1h-1zM7 10h1v1h-1zM8 10h1v1h-1zM7 11h1v1h-1zM8 11h1v1h-1z" fill="#000"/><path d="M4 4h1v1h-1zM11 4h1v1h-1zM3 5h1v1h-1zM4 5h1v1h-1zM11 5h1v1h-1zM12 5h1v1h-1zM2 6h1v1h-1zM3 6h1v1h-1zM12 6h1v1h-1zM13 6h1v1h-1zM3 7h1v1h-1zM4 7h1v1h-1zM11 7h1v1h-1zM12 7h1v1h-1zM4 8h1v1h-1zM11 8h1v1h-1z" fill="#ff0018"/></svg>
<div class="t" style="left:53px;top:474px;color:#000">ether10</div>
<div class="t" style="left:137px;top:474px;color:#000">Ethernet</div>
<div class="t" style="right:588px;top:474px;color:#000">1500</div>
<div class="t" style="right:538px;top:474px;color:#000">1598</div>
<div class="t" style="right:-2px;top:474px;color:#000">0</div>
<div class="a" style="left:196px;top:502px;width:714px;height:1px;background:#e2e2e2"></div>
<div class="a" style="left:7px;top:502px;width:5px;height:1px;background:#e2e2e2"></div>
<div class="a" style="left:7px;top:517px;width:903px;height:1px;background:#e2e2e2"></div>
<div class="a" style="left:254px;top:503px;width:1px;height:14px;background:#e2e2e2"></div>
<div class="a" style="left:324px;top:503px;width:1px;height:14px;background:#e2e2e2"></div>
<div class="a" style="left:374px;top:503px;width:1px;height:14px;background:#e2e2e2"></div>
<div class="a" style="left:494px;top:503px;width:1px;height:14px;background:#e2e2e2"></div>
<div class="a" style="left:614px;top:503px;width:1px;height:14px;background:#e2e2e2"></div>
<div class="a" style="left:714px;top:503px;width:1px;height:14px;background:#e2e2e2"></div>
<div class="a" style="left:814px;top:503px;width:1px;height:14px;background:#e2e2e2"></div>
<div class="a" style="left:34px;top:513px;width:1px;height:4px;background:#e2e2e2"></div>
<div class="a" style="left:134px;top:513px;width:1px;height:4px;background:#e2e2e2"></div>
<div class="a" style="left:80px;top:515px;width:6px;height:1px;background:#000"></div>
<div class="t" style="left:9px;top:504px;color:#000">I</div>
<div class="t" style="right:588px;top:504px;color:#000">1500</div>
<div class="a" style="left:24px;top:523px;width:1px;height:1px;background:#1a1a40"></div>
<div class="a" style="left:24px;top:528px;width:1px;height:2px;background:#1a1a40"></div>
<div class="a" style="left:27px;top:523px;width:1px;height:1px;background:#1a1a40"></div>
<div class="a" style="left:27px;top:528px;width:1px;height:2px;background:#1a1a40"></div>
<div class="a" style="left:30px;top:523px;width:1px;height:1px;background:#1a1a40"></div>
<div class="a" style="left:30px;top:528px;width:1px;height:2px;background:#1a1a40"></div>
<div class="t" style="left:35px;top:519px;">OLT HUAWEI Uplink</div>
<div class="a" style="left:7px;top:532px;width:903px;height:1px;background:#e2e2e2"></div>
<div class="a" style="left:7px;top:547px;width:903px;height:1px;background:#e2e2e2"></div>
<div class="a" style="left:34px;top:533px;width:1px;height:14px;background:#e2e2e2"></div>
<div class="a" style="left:134px;top:533px;width:1px;height:14px;background:#e2e2e2"></div>
<div class="a" style="left:254px;top:533px;width:1px;height:14px;background:#e2e2e2"></div>
<div class="a" style="left:324px;top:533px;width:1px;height:14px;background:#e2e2e2"></div>
<div class="a" style="left:374px;top:533px;width:1px;height:14px;background:#e2e2e2"></div>
<div class="a" style="left:494px;top:533px;width:1px;height:14px;background:#e2e2e2"></div>
<div class="a" style="left:614px;top:533px;width:1px;height:14px;background:#e2e2e2"></div>
<div class="a" style="left:714px;top:533px;width:1px;height:14px;background:#e2e2e2"></div>
<div class="a" style="left:814px;top:533px;width:1px;height:14px;background:#e2e2e2"></div>
<div class="t" style="left:9px;top:534px;color:#000">R</div>
<svg class="a" style="left:35px;top:534px" width="16" height="13" viewBox="0 0 16 13" shape-rendering="crispEdges"><path d="M7 1h1v1h-1zM8 1h1v1h-1zM7 2h1v1h-1zM8 2h1v1h-1zM4 3h1v1h-1zM7 3h1v1h-1zM8 3h1v1h-1zM11 3h1v1h-1zM3 4h1v1h-1zM5 4h1v1h-1zM7 4h1v1h-1zM8 4h1v1h-1zM10 4h1v1h-1zM12 4h1v1h-1zM2 5h1v1h-1zM5 5h1v1h-1zM10 5h1v1h-1zM13 5h1v1h-1zM1 6h1v1h-1zM4 6h1v1h-1zM7 6h1v1h-1zM8 6h1v1h-1zM11 6h1v1h-1zM14 6h1v1h-1zM2 7h1v1h-1zM5 7h1v1h-1zM10 7h1v1h-1zM13 7h1v1h-1zM3 8h1v1h-1zM5 8h1v1h-1zM7 8h1v1h-1zM8 8h1v1h-1zM10 8h1v1h-1zM12 8h1v1h-1zM4 9h1v1h-1zM7 9h1v1h-1zM8 9h1v1h-1zM11 9h1v1h-1zM7 10h1v1h-1zM8 10h1v1h-1zM7 11h1v1h-1zM8 11h1v1h-1z" fill="#000"/><path d="M4 4h1v1h-1zM11 4h1v1h-1zM3 5h1v1h-1zM4 5h1v1h-1zM11 5h1v1h-1zM12 5h1v1h-1zM2 6h1v1h-1zM3 6h1v1h-1zM12 6h1v1h-1zM13 6h1v1h-1zM3 7h1v1h-1zM4 7h1v1h-1zM11 7h1v1h-1zM12 7h1v1h-1zM4 8h1v1h-1zM11 8h1v1h-1z" fill="#ff0018"/></svg>
<div class="t" style="left:53px;top:534px;color:#000">sfp1</div>
<div class="t" style="left:137px;top:534px;color:#000">Ethernet</div>
<div class="t" style="right:588px;top:534px;color:#000">1500</div>
<div class="t" style="right:538px;top:534px;color:#000">1598</div>
<div class="t" style="left:451px;top:534px;color:#000">5.7 kbps</div>
<div class="t" style="right:-2px;top:534px;color:#000">0</div>
<div class="a" style="left:24px;top:553px;width:1px;height:1px;background:#1a1a40"></div>
<div class="a" style="left:24px;top:558px;width:1px;height:2px;background:#1a1a40"></div>
<div class="a" style="left:27px;top:553px;width:1px;height:1px;background:#1a1a40"></div>
<div class="a" style="left:27px;top:558px;width:1px;height:2px;background:#1a1a40"></div>
<div class="a" style="left:30px;top:553px;width:1px;height:1px;background:#1a1a40"></div>
<div class="a" style="left:30px;top:558px;width:1px;height:2px;background:#1a1a40"></div>
<div class="t" style="left:35px;top:549px;">VLAN 110 HUAWEI</div>
<div class="a" style="left:7px;top:562px;width:903px;height:1px;background:#e2e2e2"></div>
<div class="a" style="left:7px;top:577px;width:903px;height:1px;background:#e2e2e2"></div>
<div class="a" style="left:34px;top:563px;width:1px;height:14px;background:#e2e2e2"></div>
<div class="a" style="left:134px;top:563px;width:1px;height:14px;background:#e2e2e2"></div>
<div class="a" style="left:254px;top:563px;width:1px;height:14px;background:#e2e2e2"></div>
<div class="a" style="left:324px;top:563px;width:1px;height:14px;background:#e2e2e2"></div>
<div class="a" style="left:374px;top:563px;width:1px;height:14px;background:#e2e2e2"></div>
<div class="a" style="left:494px;top:563px;width:1px;height:14px;background:#e2e2e2"></div>
<div class="a" style="left:614px;top:563px;width:1px;height:14px;background:#e2e2e2"></div>
<div class="a" style="left:714px;top:563px;width:1px;height:14px;background:#e2e2e2"></div>
<div class="a" style="left:814px;top:563px;width:1px;height:14px;background:#e2e2e2"></div>
<div class="t" style="left:9px;top:564px;color:#000">R</div>
<svg class="a" style="left:51px;top:564px" width="16" height="13" viewBox="0 0 16 13" shape-rendering="crispEdges"><path d="M6 1h1v1h-1zM9 1h1v1h-1zM5 2h1v1h-1zM6 2h1v1h-1zM9 2h1v1h-1zM10 2h1v1h-1zM4 3h1v1h-1zM6 3h1v1h-1zM9 3h1v1h-1zM11 3h1v1h-1zM3 4h1v1h-1zM6 4h1v1h-1zM9 4h1v1h-1zM12 4h1v1h-1zM2 5h1v1h-1zM5 5h1v1h-1zM6 5h1v1h-1zM7 5h1v1h-1zM8 5h1v1h-1zM9 5h1v1h-1zM10 5h1v1h-1zM13 5h1v1h-1zM1 6h1v1h-1zM4 6h1v1h-1zM6 6h1v1h-1zM9 6h1v1h-1zM11 6h1v1h-1zM14 6h1v1h-1zM2 7h1v1h-1zM5 7h1v1h-1zM6 7h1v1h-1zM7 7h1v1h-1zM8 7h1v1h-1zM9 7h1v1h-1zM10 7h1v1h-1zM13 7h1v1h-1zM3 8h1v1h-1zM6 8h1v1h-1zM9 8h1v1h-1zM12 8h1v1h-1zM4 9h1v1h-1zM6 9h1v1h-1zM9 9h1v1h-1zM11 9h1v1h-1zM5 10h1v1h-1zM6 10h1v1h-1zM9 10h1v1h-1zM10 10h1v1h-1zM6 11h1v1h-1zM9 11h1v1h-1z" fill="#000"/><path d="M5 3h1v1h-1zM10 3h1v1h-1zM4 4h1v1h-1zM5 4h1v1h-1zM10 4h1v1h-1zM11 4h1v1h-1zM3 5h1v1h-1zM4 5h1v1h-1zM11 5h1v1h-1zM12 5h1v1h-1zM2 6h1v1h-1zM3 6h1v1h-1zM5 6h1v1h-1zM7 6h1v1h-1zM8 6h1v1h-1zM10 6h1v1h-1zM12 6h1v1h-1zM13 6h1v1h-1zM3 7h1v1h-1zM4 7h1v1h-1zM11 7h1v1h-1zM12 7h1v1h-1zM4 8h1v1h-1zM5 8h1v1h-1zM10 8h1v1h-1zM11 8h1v1h-1zM5 9h1v1h-1zM10 9h1v1h-1z" fill="#00f0f8"/></svg>
<div class="t" style="left:69px;top:564px;color:#000">vlan110</div>
<div class="t" style="left:137px;top:564px;color:#000">VLAN</div>
<div class="t" style="right:588px;top:564px;color:#000">1500</div>
<div class="t" style="right:538px;top:564px;color:#000">1594</div>
<div class="t" style="left:451px;top:564px;color:#000">2.7 kbps</div>
<div class="t" style="right:-2px;top:564px;color:#000">0</div>
<div class="a" style="left:7px;top:592px;width:903px;height:1px;background:#e2e2e2"></div>
<div class="a" style="left:34px;top:578px;width:1px;height:14px;background:#e2e2e2"></div>
<div class="a" style="left:134px;top:578px;width:1px;height:14px;background:#e2e2e2"></div>
<div class="a" style="left:254px;top:578px;width:1px;height:14px;background:#e2e2e2"></div>
<div class="a" style="left:324px;top:578px;width:1px;height:14px;background:#e2e2e2"></div>
<div class="a" style="left:374px;top:578px;width:1px;height:14px;background:#e2e2e2"></div>
<div class="a" style="left:494px;top:578px;width:1px;height:14px;background:#e2e2e2"></div>
<div class="a" style="left:614px;top:578px;width:1px;height:14px;background:#e2e2e2"></div>
<div class="a" style="left:714px;top:578px;width:1px;height:14px;background:#e2e2e2"></div>
<div class="a" style="left:814px;top:578px;width:1px;height:14px;background:#e2e2e2"></div>
<div class="t" style="left:9px;top:579px;color:#8a8a8a">X</div>
<svg class="a" style="left:35px;top:579px" width="16" height="13" viewBox="0 0 16 13" shape-rendering="crispEdges"><path d="M4 3h1v1h-1zM11 3h1v1h-1zM3 4h1v1h-1zM5 4h1v1h-1zM10 4h1v1h-1zM12 4h1v1h-1zM2 5h1v1h-1zM5 5h1v1h-1zM10 5h1v1h-1zM13 5h1v1h-1zM1 6h1v1h-1zM4 6h1v1h-1zM7 6h1v1h-1zM8 6h1v1h-1zM11 6h1v1h-1zM14 6h1v1h-1zM2 7h1v1h-1zM5 7h1v1h-1zM10 7h1v1h-1zM13 7h1v1h-1zM3 8h1v1h-1zM5 8h1v1h-1zM10 8h1v1h-1zM12 8h1v1h-1zM4 9h1v1h-1zM11 9h1v1h-1z" fill="#7a7a7a"/></svg>
<div class="t" style="left:53px;top:579px;color:#8a8a8a">test3-adminolt</div>
<div class="t" style="left:137px;top:579px;color:#8a8a8a">PPTP Client</div>
<div class="t" style="right:-2px;top:579px;color:#8a8a8a">0</div>
<div class="a" style="left:7px;top:607px;width:903px;height:1px;background:#e2e2e2"></div>
<div class="a" style="left:34px;top:593px;width:1px;height:14px;background:#e2e2e2"></div>
<div class="a" style="left:134px;top:593px;width:1px;height:14px;background:#e2e2e2"></div>
<div class="a" style="left:254px;top:593px;width:1px;height:14px;background:#e2e2e2"></div>
<div class="a" style="left:324px;top:593px;width:1px;height:14px;background:#e2e2e2"></div>
<div class="a" style="left:374px;top:593px;width:1px;height:14px;background:#e2e2e2"></div>
<div class="a" style="left:494px;top:593px;width:1px;height:14px;background:#e2e2e2"></div>
<div class="a" style="left:614px;top:593px;width:1px;height:14px;background:#e2e2e2"></div>
<div class="a" style="left:714px;top:593px;width:1px;height:14px;background:#e2e2e2"></div>
<div class="a" style="left:814px;top:593px;width:1px;height:14px;background:#e2e2e2"></div>
<div class="t" style="left:9px;top:594px;color:#000">RS</div>
<svg class="a" style="left:35px;top:594px" width="16" height="13" viewBox="0 0 16 13" shape-rendering="crispEdges"><path d="M6 1h1v1h-1zM9 1h1v1h-1zM5 2h1v1h-1zM6 2h1v1h-1zM9 2h1v1h-1zM10 2h1v1h-1zM4 3h1v1h-1zM6 3h1v1h-1zM9 3h1v1h-1zM11 3h1v1h-1zM3 4h1v1h-1zM6 4h1v1h-1zM9 4h1v1h-1zM12 4h1v1h-1zM2 5h1v1h-1zM5 5h1v1h-1zM6 5h1v1h-1zM7 5h1v1h-1zM8 5h1v1h-1zM9 5h1v1h-1zM10 5h1v1h-1zM13 5h1v1h-1zM1 6h1v1h-1zM4 6h1v1h-1zM6 6h1v1h-1zM9 6h1v1h-1zM11 6h1v1h-1zM14 6h1v1h-1zM2 7h1v1h-1zM5 7h1v1h-1zM6 7h1v1h-1zM7 7h1v1h-1zM8 7h1v1h-1zM9 7h1v1h-1zM10 7h1v1h-1zM13 7h1v1h-1zM3 8h1v1h-1zM6 8h1v1h-1zM9 8h1v1h-1zM12 8h1v1h-1zM4 9h1v1h-1zM6 9h1v1h-1zM9 9h1v1h-1zM11 9h1v1h-1zM5 10h1v1h-1zM6 10h1v1h-1zM9 10h1v1h-1zM10 10h1v1h-1zM6 11h1v1h-1zM9 11h1v1h-1z" fill="#000"/><path d="M5 3h1v1h-1zM10 3h1v1h-1zM4 4h1v1h-1zM5 4h1v1h-1zM10 4h1v1h-1zM11 4h1v1h-1zM3 5h1v1h-1zM4 5h1v1h-1zM11 5h1v1h-1zM12 5h1v1h-1zM2 6h1v1h-1zM3 6h1v1h-1zM5 6h1v1h-1zM7 6h1v1h-1zM8 6h1v1h-1zM10 6h1v1h-1zM12 6h1v1h-1zM13 6h1v1h-1zM3 7h1v1h-1zM4 7h1v1h-1zM11 7h1v1h-1zM12 7h1v1h-1zM4 8h1v1h-1zM5 8h1v1h-1zM10 8h1v1h-1zM11 8h1v1h-1zM5 9h1v1h-1zM10 9h1v1h-1z" fill="#00f0f8"/></svg>
<div class="t" style="left:53px;top:594px;color:#000">wlan1</div>
<div class="t" style="left:137px;top:594px;color:#000">Wireless (Atheros AR9...</div>
<div class="t" style="right:588px;top:594px;color:#000">1500</div>
<div class="t" style="right:538px;top:594px;color:#000">1600</div>
<div class="t" style="left:440px;top:594px;color:#000">234.5 kbps</div>
<div class="t" style="right:-2px;top:594px;color:#000">0</div>
<svg class="a" style="left:8px;top:129px" width="6" height="11" viewBox="0 0 6 11"><path d="M1 1.5l3.5 4-3.5 4" stroke="#7a7a7a" stroke-width="1.1" fill="none"/></svg>
<div class="t" style="left:9px;top:623px;">27 items (1 selected)</div>
<div class="a" style="left:2px;top:330px;width:441px;height:48px;border:3px solid #f00;box-shadow:3px 3px 5px rgba(0,0,0,0.55), inset 2px 3px 5px rgba(0,0,0,0.5)"></div>
<div class="a" style="left:453px;top:182px;width:454px;height:452px;background:#f0f0f0;border:1px solid #000"></div>
<div class="a" style="left:454px;top:183px;width:452px;height:22px;background:#5050cd"></div>
<div class="a" style="left:454px;top:183px;width:452px;height:1px;background:#7676e0"></div>
<div class="t" style="left:460px;top:190px;color:#fff">Interface &lt;vlan120&gt;</div>
<div class="a" style="left:870px;top:187px;width:15px;height:15px;background:#f0f0f0;border:1px solid #3c3c3c"></div>
<div class="a" style="left:873px;top:190px;width:9px;height:9px;border:1px solid #3c3c3c;border-top:2px solid #3c3c3c"></div>
<div class="a" style="left:887px;top:187px;width:15px;height:15px;background:#f0f0f0;border:1px solid #3c3c3c"></div>
<svg class="a" style="left:887px;top:187px" width="15" height="15" viewBox="0 0 15 15"><path d="M4 4l7 7M11 4l-7 7" stroke="#1e1e1e" stroke-width="2"/></svg>
<div class="a" style="left:459px;top:207px;width:51px;height:26px;background:#f3f3f3;border-left:1px solid #fff;border-top:1px solid #fff;border-right:1px solid #a0a0a0"></div>
<div class="t" style="left:465px;top:213px;">General</div>
<div class="a" style="left:510px;top:210px;width:75px;height:23px;background:#d9d9d9;border-left:1px solid #f4f4f4;border-top:1px solid #e6e6e6"></div>
<div class="t" style="left:518px;top:216px;">Loop Protect</div>
<div class="a" style="left:585px;top:210px;width:44px;height:23px;background:#d9d9d9;border-left:1px solid #f4f4f4;border-top:1px solid #e6e6e6"></div>
<div class="t" style="left:592px;top:216px;">Status</div>
<div class="a" style="left:629px;top:210px;width:43px;height:23px;background:#d9d9d9;border-left:1px solid #f4f4f4;border-top:1px solid #e6e6e6"></div>
<div class="t" style="left:636px;top:216px;">Traffic</div>
<div class="a" style="left:455px;top:233px;width:1px;height:375px;background:#fcfcfc"></div>
<div class="a" style="left:804px;top:233px;width:1px;height:375px;background:#a0a0a0"></div>
<div class="a" style="left:457px;top:607px;width:348px;height:1px;background:#a0a0a0"></div>
<div class="t" style="right:379px;top:243px;">Name:</div>
<div class="in" style="left:535px;top:240px;width:262px;height:17px"></div>
<div class="a" style="left:537px;top:242px;width:40px;height:13px;background:#3399ff"></div>
<div class="t" style="left:538px;top:243px;color:#fff">vlan120</div>
<div class="t" style="right:379px;top:266px;">Type:</div>
<div class="dis" style="left:535px;top:263px;width:262px;height:17px"></div>
<div class="t" style="left:538px;top:266px;">VLAN</div>
<div class="t" style="right:379px;top:289px;">MTU:</div>
<div class="in" style="left:535px;top:286px;width:262px;height:17px"></div>
<div class="t" style="left:538px;top:289px;">1500</div>
<div class="t" style="right:379px;top:312px;">Actual MTU:</div>
<div class="dis" style="left:535px;top:309px;width:262px;height:17px"></div>
<div class="t" style="left:538px;top:312px;">1500</div>
<div class="t" style="right:379px;top:335px;">L2 MTU:</div>
<div class="dis" style="left:535px;top:332px;width:262px;height:17px"></div>
<div class="t" style="left:538px;top:335px;">1594</div>
<div class="t" style="right:379px;top:358px;">MAC Address:</div>
<div class="dis" style="left:535px;top:355px;width:262px;height:17px"></div>
<div class="t" style="left:538px;top:358px;">l</div>
<div class="t" style="right:379px;top:381px;">ARP:</div>
<div class="in" style="left:535px;top:378px;width:244px;height:17px"></div>
<div class="t" style="left:538px;top:381px;">enabled</div>
<div class="t" style="right:379px;top:404px;">ARP Timeout:</div>
<div class="dis" style="left:535px;top:401px;width:244px;height:17px"></div>
<div class="btn" style="left:780px;top:378px;width:17px;height:17px;border-color:#a8a8a8"></div>
<svg class="a" style="left:780px;top:378px" width="17" height="17" viewBox="0 0 17 17"><path d="M5 4.5h7" stroke="#000" stroke-width="1.2"/><path d="M7 6.5h3v3h2.5l-4 4-4-4h2.5z" fill="#000"/></svg>
<svg class="a" style="left:782px;top:404px" width="15" height="10" viewBox="0 0 15 10"><path d="M2 2h11l-5.5 6z" fill="#000"/></svg>
<div class="a" style="left:463px;top:425px;width:334px;height:1px;background:#a0a0a0"></div>
<div class="a" style="left:463px;top:426px;width:334px;height:1px;background:#fff"></div>
<div class="t" style="right:379px;top:435px;">VLAN ID:</div>
<div class="in" style="left:535px;top:432px;width:262px;height:17px"></div>
<div class="t" style="left:538px;top:435px;">120</div>
<div class="t" style="right:379px;top:458px;">Interface:</div>
<div class="in" style="left:535px;top:455px;width:244px;height:17px"></div>
<div class="t" style="left:538px;top:458px;">ether5</div>
<div class="btn" style="left:780px;top:455px;width:17px;height:17px;border-color:#a8a8a8"></div>
<svg class="a" style="left:780px;top:455px" width="17" height="17" viewBox="0 0 17 17"><path d="M5 4.5h7" stroke="#000" stroke-width="1.2"/><path d="M7 6.5h3v3h2.5l-4 4-4-4h2.5z" fill="#000"/></svg>
<div class="in" style="left:535px;top:481px;width:12px;height:12px"></div>
<div class="t" style="left:551px;top:481px;">Use Service Tag</div>
<div class="btn" style="left:815px;top:211px;width:82px;height:23px;border-color:#000"></div>
<div class="t" style="left:815px;width:82px;text-align:center;top:217px">OK</div>
<div class="btn" style="left:815px;top:237px;width:82px;height:23px;border-color:#a2a2a2"></div>
<div class="t" style="left:815px;width:82px;text-align:center;top:243px">Cancel</div>
<div class="btn" style="left:815px;top:263px;width:82px;height:23px;border-color:#a2a2a2"></div>
<div class="t" style="left:815px;width:82px;text-align:center;top:269px">Apply</div>
<div class="btn" style="left:815px;top:294px;width:82px;height:23px;border-color:#a2a2a2"></div>
<div class="t" style="left:815px;width:82px;text-align:center;top:300px">Disable</div>
<div class="btn" style="left:815px;top:320px;width:82px;height:23px;border-color:#a2a2a2"></div>
<div class="t" style="left:815px;width:82px;text-align:center;top:326px">Comment</div>
<div class="btn" style="left:815px;top:346px;width:82px;height:23px;border-color:#a2a2a2"></div>
<div class="t" style="left:815px;width:82px;text-align:center;top:352px">Copy</div>
<div class="btn" style="left:815px;top:372px;width:82px;height:23px;border-color:#a2a2a2"></div>
<div class="t" style="left:815px;width:82px;text-align:center;top:378px">Remove</div>
<div class="btn" style="left:815px;top:398px;width:82px;height:23px;border-color:#a2a2a2"></div>
<div class="t" style="left:815px;width:82px;text-align:center;top:404px">Torch</div>
<div class="a" style="left:456px;top:610px;width:146px;height:19px;border-left:1px solid #a0a0a0;border-top:1px solid #a0a0a0;border-right:1px solid #fafafa;border-bottom:1px solid #fafafa"></div>
<div class="t" style="left:459px;top:615px;color:#000">enabled</div>
<div class="a" style="left:605px;top:610px;width:145px;height:19px;border-left:1px solid #a0a0a0;border-top:1px solid #a0a0a0;border-right:1px solid #fafafa;border-bottom:1px solid #fafafa"></div>
<div class="t" style="left:608px;top:615px;color:#000">running</div>
<div class="a" style="left:752px;top:610px;width:150px;height:19px;border-left:1px solid #a0a0a0;border-top:1px solid #a0a0a0;border-right:1px solid #fafafa;border-bottom:1px solid #fafafa"></div>
<div class="t" style="left:755px;top:615px;color:#a0a0a0">slave</div>
<div class="a" style="left:474px;top:446px;width:333px;height:35px;border:3px solid #f00;box-shadow:3px 3px 5px rgba(0,0,0,0.55), inset 2px 3px 5px rgba(0,0,0,0.5)"></div>
</body></html>
